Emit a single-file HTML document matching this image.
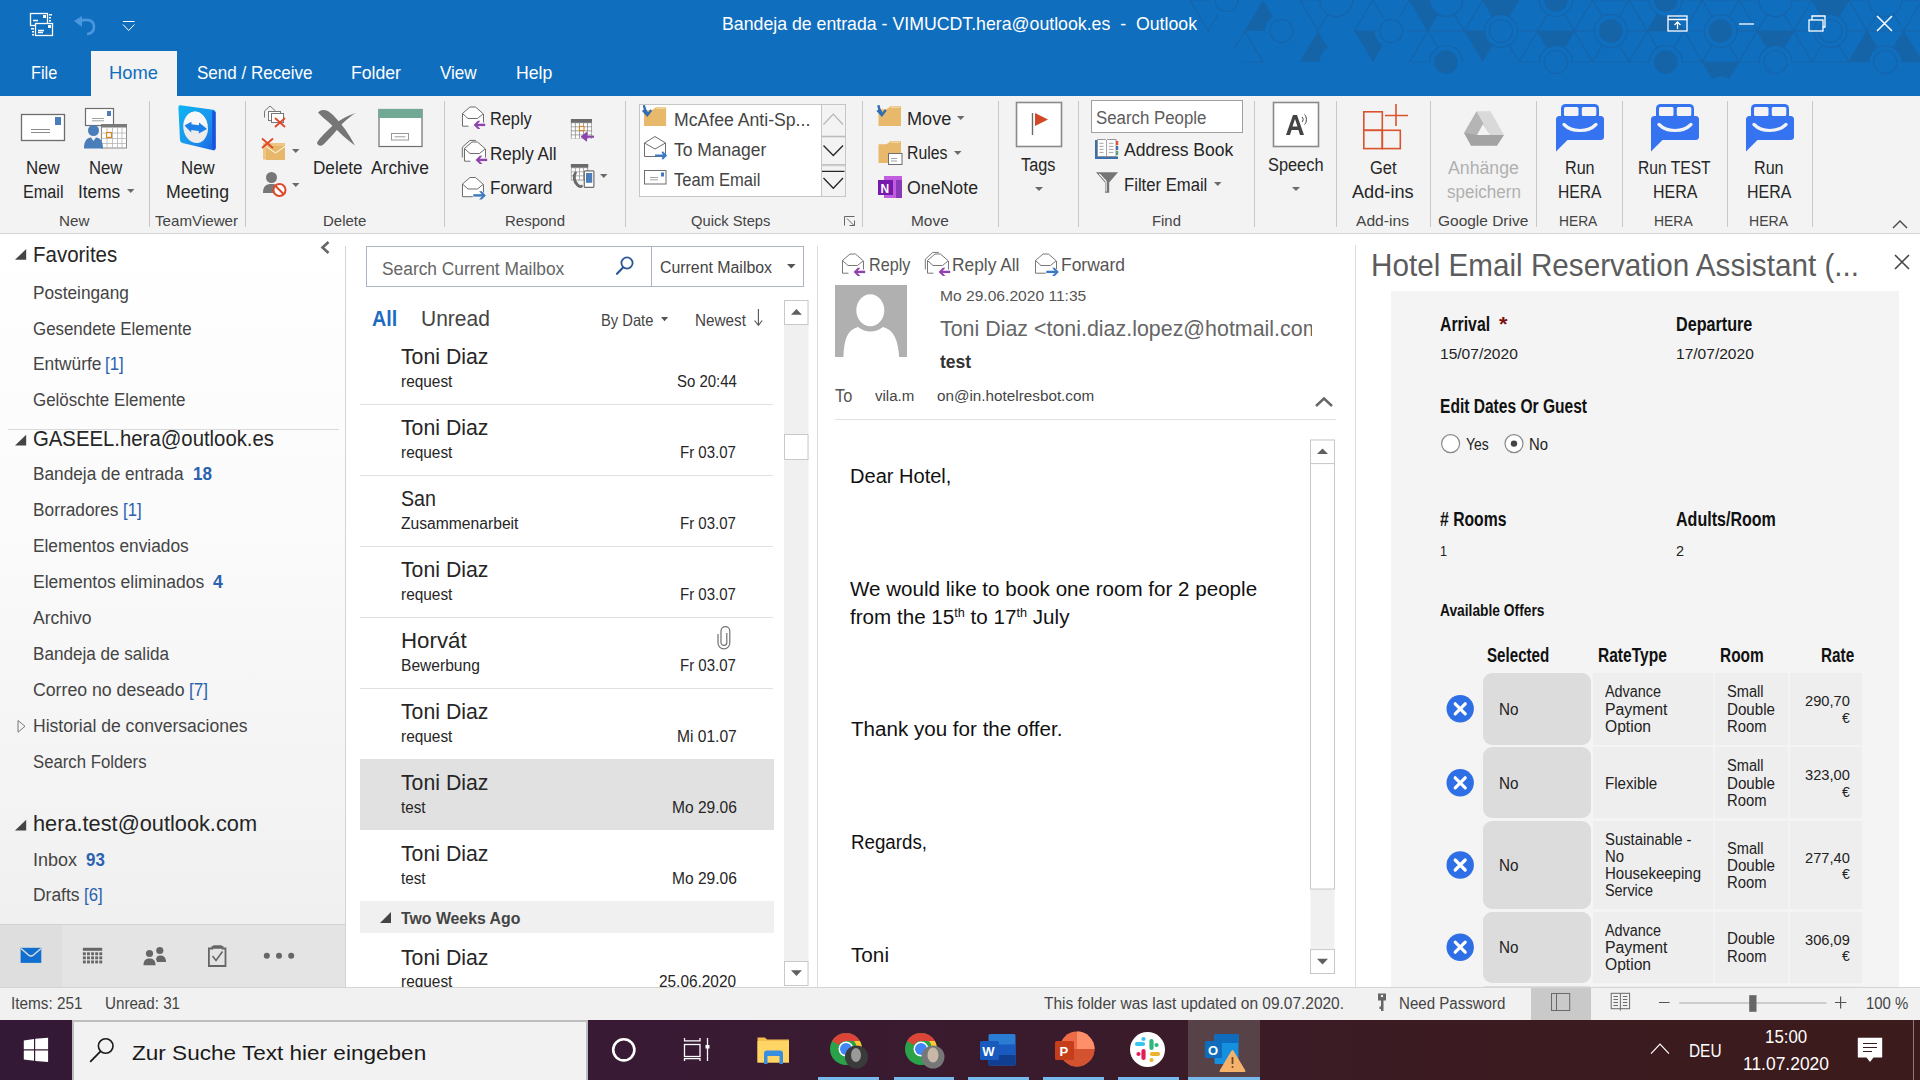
<!DOCTYPE html>
<html><head><meta charset="utf-8"><style>*{margin:0;padding:0;box-sizing:border-box}
html,body{width:1920px;height:1080px;overflow:hidden;background:#fff;font-family:"Liberation Sans",sans-serif;color:#262626}
.a{position:absolute}
.t{position:absolute;white-space:nowrap;line-height:1}
svg{position:absolute;overflow:visible}
</style></head><body>
<div class="a" style="left:0px;top:0px;width:1920px;height:96px;background:#106ebe;"></div>
<svg width="1920" height="96" style="left:0;top:0"><defs><clipPath id="tc"><rect x="1180" y="0" width="740" height="96"></rect></clipPath></defs><g clip-path="url(#tc)"><path d="M1263.1 0.0L1244.8 31.0L1281.4 31.0ZM1318.0 31.0L1299.7 62.0L1336.3 62.0ZM1354.6 31.0L1391.2 31.0L1372.9 62.0ZM1409.5 0.0L1446.1 0.0L1427.8 31.0ZM1482.7 0.0L1519.3 0.0L1501.0 31.0ZM1464.4 31.0L1501.0 31.0L1482.7 62.0ZM1537.6 31.0L1574.2 31.0L1555.9 62.0ZM1665.7 0.0L1647.4 31.0L1684.0 31.0ZM1757.2 31.0L1793.8 31.0L1775.5 62.0ZM1812.1 0.0L1848.7 0.0L1830.4 31.0ZM1867.0 31.0L1848.7 62.0L1885.3 62.0ZM1903.6 31.0L1885.3 62.0L1921.9 62.0ZM1702.3 62.0L1738.9 62.0L1720.6 93.0Z" fill="#1664a8"></path><path d="M1189.9 0.0L1226.5 0.0L1208.2 31.0ZM1244.8 31.0L1226.5 62.0L1263.1 62.0ZM1299.7 0.0L1336.3 0.0L1318.0 31.0ZM1372.9 0.0L1354.6 31.0L1391.2 31.0ZM1409.5 0.0L1391.2 31.0L1427.8 31.0ZM1446.1 0.0L1427.8 31.0L1464.4 31.0ZM1482.7 0.0L1464.4 31.0L1501.0 31.0ZM1427.8 31.0L1409.5 62.0L1446.1 62.0ZM1501.0 31.0L1537.6 31.0L1519.3 62.0ZM1537.6 31.0L1519.3 62.0L1555.9 62.0ZM1555.9 0.0L1537.6 31.0L1574.2 31.0ZM1592.5 0.0L1574.2 31.0L1610.8 31.0ZM1574.2 31.0L1555.9 62.0L1592.5 62.0ZM1574.2 31.0L1610.8 31.0L1592.5 62.0ZM1592.5 0.0L1574.2 31.0L1610.8 31.0ZM1592.5 0.0L1629.1 0.0L1610.8 31.0ZM1610.8 31.0L1592.5 62.0L1629.1 62.0ZM1610.8 31.0L1647.4 31.0L1629.1 62.0ZM1629.1 0.0L1610.8 31.0L1647.4 31.0ZM1629.1 0.0L1665.7 0.0L1647.4 31.0ZM1647.4 31.0L1629.1 62.0L1665.7 62.0ZM1647.4 31.0L1684.0 31.0L1665.7 62.0ZM1665.7 0.0L1647.4 31.0L1684.0 31.0ZM1665.7 0.0L1702.3 0.0L1684.0 31.0ZM1684.0 31.0L1665.7 62.0L1702.3 62.0ZM1684.0 31.0L1720.6 31.0L1702.3 62.0ZM1702.3 0.0L1684.0 31.0L1720.6 31.0ZM1702.3 0.0L1738.9 0.0L1720.6 31.0ZM1720.6 31.0L1702.3 62.0L1738.9 62.0ZM1720.6 31.0L1757.2 31.0L1738.9 62.0ZM1738.9 0.0L1720.6 31.0L1757.2 31.0ZM1738.9 0.0L1775.5 0.0L1757.2 31.0ZM1757.2 31.0L1738.9 62.0L1775.5 62.0ZM1757.2 31.0L1793.8 31.0L1775.5 62.0ZM1775.5 0.0L1757.2 31.0L1793.8 31.0ZM1775.5 0.0L1812.1 0.0L1793.8 31.0ZM1793.8 31.0L1775.5 62.0L1812.1 62.0ZM1793.8 31.0L1830.4 31.0L1812.1 62.0ZM1812.1 0.0L1793.8 31.0L1830.4 31.0ZM1812.1 0.0L1848.7 0.0L1830.4 31.0ZM1830.4 31.0L1812.1 62.0L1848.7 62.0ZM1830.4 31.0L1867.0 31.0L1848.7 62.0ZM1848.7 0.0L1830.4 31.0L1867.0 31.0ZM1848.7 0.0L1885.3 0.0L1867.0 31.0ZM1867.0 31.0L1848.7 62.0L1885.3 62.0ZM1867.0 31.0L1903.6 31.0L1885.3 62.0ZM1885.3 0.0L1867.0 31.0L1903.6 31.0ZM1885.3 0.0L1921.9 0.0L1903.6 31.0ZM1903.6 31.0L1885.3 62.0L1921.9 62.0ZM1903.6 31.0L1940.2 31.0L1921.9 62.0ZM1921.9 0.0L1903.6 31.0L1940.2 31.0ZM1921.9 0.0L1958.5 0.0L1940.2 31.0ZM1940.2 31.0L1921.9 62.0L1958.5 62.0ZM1940.2 31.0L1976.8 31.0L1958.5 62.0Z" fill="none" stroke="#1664a8" stroke-width="1.1"></path><circle cx="1226.5" cy="0.0" r="16.5" fill="#106ebe"></circle><circle cx="1226.5" cy="62.0" r="16.5" fill="#106ebe"></circle><circle cx="1336.3" cy="0.0" r="16.5" fill="#106ebe"></circle><circle cx="1336.3" cy="62.0" r="16.5" fill="#106ebe"></circle><circle cx="1446.1" cy="0.0" r="16.5" fill="#106ebe" stroke="#1664a8" stroke-width="1.1"></circle><circle cx="1446.1" cy="62.0" r="16.5" fill="#106ebe" stroke="#1664a8" stroke-width="1.1"></circle><circle cx="1555.9" cy="0.0" r="16.5" fill="#106ebe" stroke="#1664a8" stroke-width="1.1"></circle><circle cx="1555.9" cy="62.0" r="16.5" fill="#106ebe" stroke="#1664a8" stroke-width="1.1"></circle><circle cx="1665.7" cy="0.0" r="16.5" fill="#106ebe" stroke="#1664a8" stroke-width="1.1"></circle><circle cx="1665.7" cy="62.0" r="16.5" fill="#106ebe" stroke="#1664a8" stroke-width="1.1"></circle><circle cx="1775.5" cy="0.0" r="16.5" fill="#106ebe" stroke="#1664a8" stroke-width="1.1"></circle><circle cx="1775.5" cy="62.0" r="16.5" fill="#106ebe" stroke="#1664a8" stroke-width="1.1"></circle><circle cx="1885.3" cy="0.0" r="16.5" fill="#106ebe" stroke="#1664a8" stroke-width="1.1"></circle><circle cx="1885.3" cy="62.0" r="16.5" fill="#106ebe" stroke="#1664a8" stroke-width="1.1"></circle><circle cx="1281.4" cy="31.0" r="16.5" fill="#106ebe"></circle><circle cx="1391.2" cy="31.0" r="16.5" fill="#106ebe"></circle><circle cx="1501.0" cy="31.0" r="16.5" fill="#106ebe" stroke="#1664a8" stroke-width="1.1"></circle><circle cx="1610.8" cy="31.0" r="16.5" fill="#106ebe" stroke="#1664a8" stroke-width="1.1"></circle><circle cx="1720.6" cy="31.0" r="16.5" fill="#106ebe" stroke="#1664a8" stroke-width="1.1"></circle><circle cx="1830.4" cy="31.0" r="16.5" fill="#106ebe" stroke="#1664a8" stroke-width="1.1"></circle><circle cx="1940.2" cy="31.0" r="16.5" fill="#106ebe" stroke="#1664a8" stroke-width="1.1"></circle><circle cx="1720.6" cy="93.0" r="16.5" fill="#106ebe" stroke="#1664a8" stroke-width="1.1"></circle><rect x="1180" y="62.6" width="740" height="34" fill="#106ebe"></rect><path d="M1702.3 62.6L1738.9 62.6L1720.6 93Z" fill="#1664a8"></path><circle cx="1720.6" cy="93" r="16.5" fill="#106ebe"></circle><circle cx="1555.9" cy="0.0" r="11.8" fill="#1664a8"></circle><circle cx="1665.7" cy="0.0" r="11.8" fill="#1664a8"></circle><circle cx="1610.8" cy="31.0" r="11.8" fill="#1664a8"></circle><circle cx="1720.6" cy="31.0" r="11.8" fill="#1664a8"></circle><circle cx="1446.1" cy="62.0" r="11.8" fill="#1664a8"></circle><circle cx="1665.7" cy="62.0" r="11.8" fill="#1664a8"></circle><circle cx="1226.5" cy="0.0" r="11.5" fill="none" stroke="#1664a8" stroke-width="1.1"></circle><circle cx="1281.4" cy="31.0" r="11.5" fill="none" stroke="#1664a8" stroke-width="1.1"></circle><circle cx="1391.2" cy="31.0" r="11.5" fill="none" stroke="#1664a8" stroke-width="1.1"></circle><circle cx="1501.0" cy="31.0" r="11.5" fill="none" stroke="#1664a8" stroke-width="1.1"></circle><circle cx="1555.9" cy="62.0" r="11.5" fill="none" stroke="#1664a8" stroke-width="1.1"></circle><circle cx="1775.5" cy="62.0" r="11.5" fill="none" stroke="#1664a8" stroke-width="1.1"></circle><circle cx="1830.4" cy="31.0" r="11.5" fill="none" stroke="#1664a8" stroke-width="1.1"></circle><circle cx="1885.3" cy="62.0" r="11.5" fill="none" stroke="#1664a8" stroke-width="1.1"></circle><circle cx="1336.3" cy="0.0" r="16.5" fill="none" stroke="#1664a8" stroke-width="1.1"></circle><circle cx="1446.1" cy="0.0" r="16.5" fill="none" stroke="#1664a8" stroke-width="1.1"></circle></g></svg>
<svg width="1920" height="96" style="left:0;top:0" viewBox="0 0 1920 96">
<!-- QAT -->
<g fill="none" stroke="#fff" stroke-width="1.3">
<rect x="30.5" y="13.5" width="17" height="12"></rect>
<rect x="35.5" y="23.5" width="17" height="12" fill="#106ebe"></rect>
<path d="M33 20.5h5M38 30.5h6M38 32.5h5"></path>
</g>
<g fill="#fff"><rect x="43" y="15" width="3" height="3"></rect><rect x="48" y="25" width="3" height="3"></rect><rect x="49" y="14" width="3" height="1.5"></rect><rect x="49" y="17" width="2" height="1.5"></rect><rect x="49" y="20" width="2" height="1.5"></rect><rect x="31" y="28" width="3" height="1.5"></rect><rect x="32" y="31" width="2" height="1.5"></rect><rect x="32" y="34" width="2" height="1.5"></rect></g>
<path d="M80 21 C86 19 94 19 94 27 C94 32 90 34 87 34" fill="none" stroke="#4a97dd" stroke-width="2.6"></path>
<path d="M74 21L82 16L82 27Z" fill="#4a97dd"></path>
<path d="M123 21.5h11.5M123 24.5L128.7 30.5L134.4 24.5" fill="none" stroke="#fff" stroke-width="1"></path>
<!-- window buttons -->
<g fill="none" stroke="#fff" stroke-width="1.3">
<rect x="1668" y="16" width="19" height="15"></rect><path d="M1668 19.5h19M1677.5 29V22M1674.5 25L1677.5 22L1680.5 25"></path>
<path d="M1739 24h15"></path>
<rect x="1809" y="20" width="14" height="11"></rect><path d="M1812 20V16H1825V27H1823"></path>
<path d="M1877 16L1892 31M1892 16L1877 31" stroke-width="1.5"></path>
</g>
</svg>
<div class="t" style="left: 722px; top: 14px; font-size: 19px; color: rgb(255, 255, 255); --w: 475; transform-origin: 0px 50%; transform: scaleX(0.9326);">Bandeja de entrada - VIMUCDT.hera@outlook.es&nbsp; - &nbsp;Outlook</div>
<div class="a" style="left:91px;top:51px;width:86px;height:46px;background:#f3f3f3;"></div>
<div class="t" style="left: 31px; top: 63px; font-size: 19px; color: rgb(255, 255, 255); --w: 26.3; transform-origin: 0px 50%; transform: scaleX(0.8588);">File</div>
<div class="t" style="left: 109.3px; top: 63px; font-size: 19px; color: rgb(16, 110, 190); --w: 49; transform-origin: 0px 50%; transform: scaleX(0.9667);">Home</div>
<div class="t" style="left: 196.7px; top: 63px; font-size: 19px; color: rgb(255, 255, 255); --w: 115.6; transform-origin: 0px 50%; transform: scaleX(0.8971);">Send / Receive</div>
<div class="t" style="left: 351px; top: 63px; font-size: 19px; color: rgb(255, 255, 255); --w: 50; transform-origin: 0px 50%; transform: scaleX(0.9283);">Folder</div>
<div class="t" style="left: 440px; top: 63px; font-size: 19px; color: rgb(255, 255, 255); --w: 36.7; transform-origin: 0px 50%; transform: scaleX(0.8985);">View</div>
<div class="t" style="left: 516px; top: 63px; font-size: 19px; color: rgb(255, 255, 255); --w: 36.3; transform-origin: 0px 50%; transform: scaleX(0.9289);">Help</div>
<div class="a" style="left:0px;top:96px;width:1920px;height:138px;background:#f3f3f3;border-bottom:1px solid #d5d5d5"></div>
<div class="a" style="left:149px;top:101px;width:1px;height:126px;background:#c8c8c8;"></div>
<div class="a" style="left:245px;top:101px;width:1px;height:126px;background:#c8c8c8;"></div>
<div class="a" style="left:444px;top:101px;width:1px;height:126px;background:#c8c8c8;"></div>
<div class="a" style="left:625px;top:101px;width:1px;height:126px;background:#c8c8c8;"></div>
<div class="a" style="left:862px;top:101px;width:1px;height:126px;background:#c8c8c8;"></div>
<div class="a" style="left:998px;top:101px;width:1px;height:126px;background:#c8c8c8;"></div>
<div class="a" style="left:1078px;top:101px;width:1px;height:126px;background:#c8c8c8;"></div>
<div class="a" style="left:1254px;top:101px;width:1px;height:126px;background:#c8c8c8;"></div>
<div class="a" style="left:1336px;top:101px;width:1px;height:126px;background:#c8c8c8;"></div>
<div class="a" style="left:1430px;top:101px;width:1px;height:126px;background:#c8c8c8;"></div>
<div class="a" style="left:1536px;top:101px;width:1px;height:126px;background:#c8c8c8;"></div>
<div class="a" style="left:1622px;top:101px;width:1px;height:126px;background:#c8c8c8;"></div>
<div class="a" style="left:1727px;top:101px;width:1px;height:126px;background:#c8c8c8;"></div>
<div class="a" style="left:1812px;top:101px;width:1px;height:126px;background:#c8c8c8;"></div>
<svg width="1920" height="240" style="left:0;top:0">
<!-- New Email -->
<rect x="21.5" y="114.5" width="43" height="26" fill="#fff" stroke="#6d6d6d" stroke-width="1.3"></rect>
<rect x="55" y="117" width="6" height="8" fill="#4a7ebb"></rect>
<path d="M31 129.5H50M31 132.5H50" stroke="#8a8a8a" stroke-width="1"></path>
<!-- New Items -->
<rect x="85.5" y="108.5" width="28" height="17" fill="#fff" stroke="#6d6d6d" stroke-width="1.2"></rect>
<rect x="107" y="111" width="4" height="5" fill="#4a7ebb"></rect>
<path d="M92 118.5H104M92 120.8H104" stroke="#8a8a8a" stroke-width="0.8"></path>
<rect x="101.5" y="124.5" width="25" height="23.5" fill="#fff" stroke="#8a8a8a" stroke-width="1"></rect>
<rect x="101" y="124" width="26" height="3.5" fill="#7a7a7a"></rect>
<path d="M101.5 133H126.5M101.5 138.5H126.5M101.5 143.5H126.5M107 127.5V148M112.5 127.5V148M117.5 127.5V148M122 127.5V148" stroke="#b5b5b5" stroke-width="0.8"></path>
<rect x="106.5" y="132.5" width="5" height="5" fill="#fff" stroke="#e0821e" stroke-width="1.2"></rect>
<circle cx="93.5" cy="130.5" r="5.5" fill="#4a7ebb"></circle>
<path d="M84 148.5C84 141 87 137.5 91 137.5L93.5 141L96 137.5C100 137.5 103 141 103 148.5Z" fill="#4a7ebb"></path>
<!-- TeamViewer -->
<defs><linearGradient id="tvg" x1="0" y1="0" x2="1" y2="1"><stop offset="0" stop-color="#0cb4f2"></stop><stop offset="0.55" stop-color="#1a96ee"></stop><stop offset="1" stop-color="#1c62e2"></stop></linearGradient></defs>
<path d="M180.5 105.3Q178.3 105 178.4 107.5L180 140Q180.2 142.5 182.5 143L213 150.3Q215.8 150.8 215.7 148L215.6 113Q215.6 110.2 213 109.8Z" fill="url(#tvg)"></path>
<path d="M212.3 110.5L215.6 112V148.5L212.3 149.2Z" fill="#1a50dc"></path>
<ellipse cx="195.6" cy="127.3" rx="12.3" ry="15.8" transform="rotate(-8 195.6 127.3)" fill="#ececec"></ellipse>
<path d="M195.6 111.5A12.3 15.8 -8 0 1 207.5 125L184 127A12.3 15.8 -8 0 1 195.6 111.5Z" fill="#f7f7f7"></path>
<path d="M184.5 125.5L191.5 121.8V124.3L199 125.2V122.6L207 129L198.8 133.6V131L191.2 130V132.4Z" fill="#1a7fe6"></path>
<!-- ignore -->
<path d="M264.5 117.5V111L270 106L275.5 111" fill="none" stroke="#777" stroke-width="1"></path>
<rect x="268.5" y="111.5" width="12" height="9" fill="#fff" stroke="#777" stroke-width="1"></rect>
<rect x="271.5" y="113.5" width="12" height="9" fill="#fff" stroke="#777" stroke-width="1"></rect>
<path d="M275 118L285 127M285 118L275 127" stroke="#e0472a" stroke-width="1.8"></path>
<!-- cleanup -->
<rect x="263" y="143" width="22" height="16.5" fill="#eec683"></rect>
<rect x="266" y="146" width="19" height="14" fill="#e8b86a"></rect>
<path d="M266 146.5L275.5 153L285 146.5" fill="none" stroke="#fff" stroke-width="1"></path>
<path d="M262 138.5L273 148M273 138.5L262 148" stroke="#e0472a" stroke-width="1.8"></path>
<!-- junk -->
<circle cx="271.5" cy="177.5" r="5.5" fill="#777"></circle>
<path d="M263 193C263 186 266 184 271.5 184C277 184 280 186 280 193Z" fill="#777"></path>
<circle cx="279.5" cy="190" r="6" fill="#fff" stroke="#e0472a" stroke-width="2"></circle>
<path d="M275.5 186L283.5 194" stroke="#e0472a" stroke-width="2"></path>
<path d="M292 149H299.5L295.75 153Z M292 183H299.5L295.75 187Z" fill="#6a6a6a"></path>
<!-- Delete X -->
<path d="M318 112.5C322 108 328 110 333 115C342 124 349 134 355 145.5C350 142 344 137 337 130C330 123 322 117 318 112.5Z" fill="#767676"></path>
<path d="M356 113C346 116 336 122 329 129C323 135 318 140 317 143C318 146 321 147 324 144C330 138 336 131 342 124C347 119 352 115 356 113Z" fill="#767676"></path>
<!-- Archive -->
<rect x="379" y="109.5" width="43" height="37" fill="#fff" stroke="#6f6f6f" stroke-width="1.2"></rect>
<rect x="378.5" y="109" width="44" height="9" fill="#72a994"></rect>
<rect x="391.5" y="133.5" width="17" height="6.5" fill="none" stroke="#9a9a9a" stroke-width="1"></rect>
<path d="M394.5 136.8H405.5" stroke="#9a9a9a" stroke-width="1"></path>
<!-- Reply / Reply all / Forward -->
<g transform="translate(462.3 106)"><path d="M6.2 20.2H0.2V7.5L7.7 1H13.2L21.2 8V16.5" fill="#fff" stroke="#6d6d6d" stroke-width="1"></path><path d="M0.2 7.5L5.7 12.5H15.2L20.7 8" fill="none" stroke="#6d6d6d" stroke-width="1"></path><path d="M22.9 18.9H13.4" stroke="#8e44ad" stroke-width="2.4"></path><path d="M11.3 18.9L15.5 14.8H18.1L14.3 18.9L18.1 23H15.5Z" fill="#8e44ad"></path></g><g transform="translate(464.3 141)"><path d="M-2 16.5V6.2L5.5 -0.6H11.5" fill="none" stroke="#6d6d6d" stroke-width="1"></path><path d="M6.2 20.2H0.2V7.5L7.7 1H13.2L21.2 8V16.5" fill="#fff" stroke="#6d6d6d" stroke-width="1"></path><path d="M0.2 7.5L5.7 12.5H15.2L20.7 8" fill="none" stroke="#6d6d6d" stroke-width="1"></path><path d="M22.9 18.9H13.4" stroke="#8e44ad" stroke-width="2.4"></path><path d="M11.3 18.9L15.5 14.8H18.1L14.3 18.9L18.1 23H15.5Z" fill="#8e44ad"></path></g><g transform="translate(462.3 176.5)"><path d="M10.5 20.2H0.2V7.5L7.7 1H13.2L21.2 8V16" fill="#fff" stroke="#6d6d6d" stroke-width="1"></path><path d="M0.2 7.5L5.7 12.5H15.2L20.7 8" fill="none" stroke="#6d6d6d" stroke-width="1"></path><path d="M11 18.9H20.5" stroke="#3a78c0" stroke-width="2.4"></path><path d="M23.6 18.9L19.4 14.8H16.8L20.6 18.9L16.8 23H19.4Z" fill="#3a78c0"></path></g>
<!-- cal reply -->
<rect x="570.9" y="119" width="21.1" height="19.7" fill="#8c8c8c"></rect>
<rect x="571.6" y="123.2" width="3.3" height="3.25" fill="#fff"></rect><rect x="575.7" y="123.2" width="3.3" height="3.25" fill="#fff"></rect><rect x="579.8" y="123.2" width="3.3" height="3.25" fill="#fff"></rect><rect x="583.9" y="123.2" width="3.3" height="3.25" fill="#fff"></rect><rect x="588.0" y="123.2" width="3.3" height="3.25" fill="#fff"></rect><rect x="571.6" y="127.2" width="3.3" height="3.25" fill="#fff"></rect><rect x="575.7" y="127.2" width="3.3" height="3.25" fill="#fff"></rect><rect x="579.8" y="127.2" width="3.3" height="3.25" fill="#fff"></rect><rect x="583.9" y="127.2" width="3.3" height="3.25" fill="#fff"></rect><rect x="588.0" y="127.2" width="3.3" height="3.25" fill="#fff"></rect><rect x="571.6" y="131.3" width="3.3" height="3.25" fill="#fff"></rect><rect x="575.7" y="131.3" width="3.3" height="3.25" fill="#fff"></rect><rect x="579.8" y="131.3" width="3.3" height="3.25" fill="#fff"></rect><rect x="583.9" y="131.3" width="3.3" height="3.25" fill="#fff"></rect><rect x="588.0" y="131.3" width="3.3" height="3.25" fill="#fff"></rect><rect x="571.6" y="135.3" width="3.3" height="3.25" fill="#fff"></rect><rect x="575.7" y="135.3" width="3.3" height="3.25" fill="#fff"></rect><rect x="579.8" y="135.3" width="3.3" height="3.25" fill="#fff"></rect><rect x="583.9" y="135.3" width="3.3" height="3.25" fill="#fff"></rect><rect x="588.0" y="135.3" width="3.3" height="3.25" fill="#fff"></rect>
<rect x="570.9" y="119" width="21.1" height="3.3" fill="#6a6a6a"></rect>
<rect x="579.4" y="126.4" width="4.6" height="4.2" fill="#fff" stroke="#e0821e" stroke-width="1.1"></rect>
<path d="M582.6 136.7L594 136.7" stroke="#8e44ad" stroke-width="2.2"></path>
<path d="M581.5 136.7L586.5 132.6V140.8Z" fill="#8e44ad" stroke="#8e44ad" stroke-width="1.2" stroke-linejoin="round"></path>
<!-- cal phone -->
<rect x="570.9" y="164" width="17.3" height="16.5" fill="#9a9a9a"></rect>
<rect x="571.6" y="168.2" width="3.3" height="3.25" fill="#fff"></rect><rect x="575.7" y="168.2" width="3.3" height="3.25" fill="#fff"></rect><rect x="579.8" y="168.2" width="3.3" height="3.25" fill="#fff"></rect><rect x="583.9" y="168.2" width="3.3" height="3.25" fill="#fff"></rect><rect x="571.6" y="172.2" width="3.3" height="3.25" fill="#fff"></rect><rect x="575.7" y="172.2" width="3.3" height="3.25" fill="#fff"></rect><rect x="579.8" y="172.2" width="3.3" height="3.25" fill="#fff"></rect><rect x="583.9" y="172.2" width="3.3" height="3.25" fill="#fff"></rect><rect x="571.6" y="176.3" width="3.3" height="3.25" fill="#fff"></rect><rect x="575.7" y="176.3" width="3.3" height="3.25" fill="#fff"></rect><rect x="579.8" y="176.3" width="3.3" height="3.25" fill="#fff"></rect><rect x="583.9" y="176.3" width="3.3" height="3.25" fill="#fff"></rect>
<rect x="570.9" y="164" width="17.3" height="3.3" fill="#6a6a6a"></rect>
<path d="M575.5 173C573.5 175 573.5 181 577.5 185C579 186.5 580.5 186.8 581.5 186.3" fill="none" stroke="#6a6a6a" stroke-width="2.8" stroke-linecap="round"></path>
<rect x="584.3" y="170.8" width="9.6" height="16.6" rx="1" fill="#fff" stroke="#6d6d6d" stroke-width="1.2"></rect>
<rect x="586" y="173" width="6.2" height="9.8" fill="#4a7ebb"></rect>
<path d="M600 174H607.5L603.75 178Z" fill="#6a6a6a"></path>
<!-- Quick steps -->
<rect x="639.5" y="104.5" width="206" height="92" fill="#fff" stroke="#c6c6c6" stroke-width="1"></rect>
<rect x="821.5" y="104.5" width="24" height="92" fill="#f3f3f3" stroke="#c6c6c6" stroke-width="1"></rect>
<path d="M821.5 136.3H845.5M821.5 164.8H845.5" stroke="#b5b5b5" stroke-width="1.2" fill="none"></path>
<path d="M821.5 165.8H845.5M821.5 137H845.5" stroke="#c8c8c8" stroke-width="0.8" fill="none"></path>
<path d="M823.5 124.5L833.3 114.2L843 124.5" fill="none" stroke="#b5b5b5" stroke-width="1.2"></path>
<path d="M823.5 145.5L833.3 155.5L843 145.5" fill="none" stroke="#262626" stroke-width="1.3"></path>
<path d="M822 171.3H844.5M823.5 178L833.3 188.3L843 178" fill="none" stroke="#262626" stroke-width="1.3"></path>
<path d="M644 110.2H652L655.9 107.2H666.1V126H644Z" fill="#e8b96a"></path>
<path d="M656.5 108.3H665" stroke="#f6dcae" stroke-width="1"></path>
<path d="M643.8 105.3C644.5 109 645.5 111.5 647.3 113.5" fill="none" stroke="#2f6db5" stroke-width="2.4"></path>
<path d="M642.8 110.3L647.3 115.2L651.3 110" fill="none" stroke="#2f6db5" stroke-width="2.2"></path>
<g fill="#fff" stroke="#6d6d6d" stroke-width="1">
<path d="M644.5 156.5V143L655 136.5L665.5 143V156.5Z"></path><path d="M644.5 143L655 149L665.5 143" fill="none"></path>
<rect x="644.5" y="170.5" width="21.5" height="13.5"></rect>
</g>
<path d="M655 155.5H665.5M662.2 152L665.7 155.5L662.2 159" fill="none" stroke="#3a7bc8" stroke-width="2"></path>
<rect x="661" y="172.5" width="3" height="4" fill="#3a7bc8"></rect>
<path d="M650 177.5H658M650 179.8H658" stroke="#8a8a8a" stroke-width="0.8"></path>
<path d="M844.5 225.5V216.5H854.5M847 218.5L854 225.5M849.5 225.5H854.5V220.5" fill="none" stroke="#555" stroke-width="0.9"></path>
<!-- Move -->
<path d="M878.5 109.2H886.5L890.5 106.2H901V126H878.5Z" fill="#e8b96a"></path>
<path d="M891 107.3H900" stroke="#f6dcae" stroke-width="1"></path>
<path d="M878.3 105.3C879 109 880 111.5 881.8 113.5" fill="none" stroke="#2f6db5" stroke-width="2.4"></path>
<path d="M877.3 110.3L881.8 115.2L885.8 110" fill="none" stroke="#2f6db5" stroke-width="2.2"></path>
<path d="M878.5 144.2H886.5L890.5 141.2H901V163H878.5Z" fill="#e8b96a"></path>
<path d="M891 142.3H900" stroke="#f6dcae" stroke-width="1"></path>
<rect x="888.5" y="153.5" width="13.5" height="11" fill="#fff" stroke="#6d6d6d" stroke-width="1"></rect>
<path d="M891 158.5H897M891 161H897" stroke="#8a8a8a" stroke-width="0.8"></path>
<path d="M957 116H964.5L960.75 120Z M954 151H961.5L957.75 155Z" fill="#6a6a6a"></path>
<rect x="884" y="176" width="18" height="22" fill="#c05edf"></rect>
<rect x="896" y="180" width="6" height="18" fill="#8a3ab9"></rect>
<rect x="878" y="180" width="15" height="15" fill="#7719aa"></rect>
<text x="880.5" y="192.5" font-family="Liberation Sans" font-weight="bold" font-size="12" fill="#fff">N</text>
<!-- Tags -->
<rect x="1016.5" y="102.5" width="45" height="44" fill="#fff" stroke="#8a8a8a" stroke-width="1.6"></rect>
<path d="M1032.5 113V135" stroke="#6a6a6a" stroke-width="1.4"></path>
<path d="M1035 113L1048 119.5L1035 126Z" fill="#d24726"></path>
<path d="M1035 187H1043L1039 191Z" fill="#6a6a6a"></path>
<!-- Find -->
<rect x="1091.5" y="100.5" width="151" height="32" fill="#fff" stroke="#a0a0a0" stroke-width="1"></rect>
<path d="M1095 139.9H1097.4V156.5H1118V158.9H1095Z" fill="#3a6fb0"></path>
<path d="M1097.5 139.5H1105.5L1106.5 140.5L1107.5 139.5H1116V156.5H1097.5Z" fill="#fff" stroke="#8a8a8a" stroke-width="0.9"></path>
<path d="M1106.5 140.5V156.5" stroke="#9a9a9a" stroke-width="0.9"></path>
<path d="M1099.5 143.3H1103.5M1099.5 146.4H1103.5M1099.5 149.4H1103.5M1099.5 152.4H1103.5M1108.8 143.3H1113.5M1108.8 146.4H1113.5M1108.8 149.4H1113.5M1108.8 152.4H1113.5" stroke="#9a9a9a" stroke-width="0.9"></path>
<rect x="1116" y="141" width="2.2" height="4" fill="#e0532f"></rect><rect x="1116" y="146" width="2.2" height="4" fill="#3a6fb0"></rect><rect x="1116" y="151" width="2.2" height="4" fill="#5aa07a"></rect>
<path d="M1096 172.2H1118L1109.2 182.5V192.8H1105V182.5Z" fill="#767676"></path>
<path d="M1099.3 173.8L1106.1 181.3V191.6" fill="none" stroke="#fff" stroke-width="1.1"></path>
<path d="M1214 182H1221.5L1217.75 186Z" fill="#6a6a6a"></path>
<!-- Speech -->
<rect x="1273.5" y="102.5" width="45" height="44" fill="#fff" stroke="#8a8a8a" stroke-width="1.6"></rect>
<path d="M1286 135L1293 115H1297L1304 135H1300L1298.5 130H1291.5L1290 135ZM1292.5 126.5H1297.5L1295 119Z" fill="#444"></path>
<path d="M1302 117C1303.5 118 1303.5 121 1302 122M1304.5 114.5C1307 116.5 1307 122.5 1304.5 124.5" fill="none" stroke="#444" stroke-width="1"></path>
<path d="M1292 187H1300L1296 191Z" fill="#6a6a6a"></path>
<!-- Add-ins -->
<g fill="none" stroke="#d9532c" stroke-width="1.6">
<rect x="1363.8" y="111.8" width="18.5" height="18.5"></rect><rect x="1363.8" y="130.3" width="18.5" height="18.3"></rect><rect x="1382.3" y="130.3" width="18" height="18.3"></rect>
<path d="M1396 104V126M1385 115.5H1408"></path>
</g>
<!-- Google drive -->
<path d="M1476.5 111.3H1490.5L1504 135H1490Z" fill="#d9d9d9"></path>
<path d="M1476.5 111.3L1490 135L1483 145.7L1464 133Z" fill="#b5b5b5"></path>
<path d="M1464 133L1471 145.7H1497L1504 135H1477Z" fill="#a3a3a3"></path>
<path d="M1483 124L1490 135H1477Z" fill="#f3f3f3"></path>
</svg>
<svg width="48" height="48" style="left:1556px;top:104px" viewBox="0 0 48 48">
<rect x="5" y="0" width="38" height="16" rx="4.5" fill="#3573f0"></rect>
<rect x="0" y="12" width="48" height="24" rx="3.5" fill="#3573f0"></rect>
<path d="M0 30V47.5L12 35.5Z" fill="#3573f0"></path>
<rect x="8" y="3" width="14.5" height="9" rx="1.5" fill="#f3f3f3"></rect><rect x="25.8" y="3" width="14.5" height="9" rx="1.5" fill="#f3f3f3"></rect>
<path d="M8 20.5C16 28.5 32 28.5 40 20.5" fill="none" stroke="#f3f3f3" stroke-width="3.2" stroke-linecap="round"></path>
</svg>
<svg width="48" height="48" style="left:1651px;top:104px" viewBox="0 0 48 48">
<rect x="5" y="0" width="38" height="16" rx="4.5" fill="#3573f0"></rect>
<rect x="0" y="12" width="48" height="24" rx="3.5" fill="#3573f0"></rect>
<path d="M0 30V47.5L12 35.5Z" fill="#3573f0"></path>
<rect x="8" y="3" width="14.5" height="9" rx="1.5" fill="#f3f3f3"></rect><rect x="25.8" y="3" width="14.5" height="9" rx="1.5" fill="#f3f3f3"></rect>
<path d="M8 20.5C16 28.5 32 28.5 40 20.5" fill="none" stroke="#f3f3f3" stroke-width="3.2" stroke-linecap="round"></path>
</svg>
<svg width="48" height="48" style="left:1746px;top:104px" viewBox="0 0 48 48">
<rect x="5" y="0" width="38" height="16" rx="4.5" fill="#3573f0"></rect>
<rect x="0" y="12" width="48" height="24" rx="3.5" fill="#3573f0"></rect>
<path d="M0 30V47.5L12 35.5Z" fill="#3573f0"></path>
<rect x="8" y="3" width="14.5" height="9" rx="1.5" fill="#f3f3f3"></rect><rect x="25.8" y="3" width="14.5" height="9" rx="1.5" fill="#f3f3f3"></rect>
<path d="M8 20.5C16 28.5 32 28.5 40 20.5" fill="none" stroke="#f3f3f3" stroke-width="3.2" stroke-linecap="round"></path>
</svg>
<svg width="20" height="12" style="left:1892px;top:218px"><path d="M1 10L8 3L15 10" fill="none" stroke="#444" stroke-width="1.4"></path></svg>
<div class="t" style="left: 25.9px; top: 159px; font-size: 18px; color: rgb(38, 38, 38); --w: 33.8; transform-origin: 0px 50%; transform: scaleX(0.9385);">New</div>
<div class="t" style="left: 23px; top: 183px; font-size: 18px; color: rgb(38, 38, 38); --w: 40.5; transform-origin: 0px 50%; transform: scaleX(0.8997);">Email</div>
<div class="t" style="left: 89.2px; top: 159px; font-size: 18px; color: rgb(38, 38, 38); --w: 33.4; transform-origin: 0px 50%; transform: scaleX(0.9274);">New</div>
<div class="t" style="left: 77.8px; top: 183px; font-size: 18px; color: rgb(38, 38, 38); --w: 42.2; transform-origin: 0px 50%; transform: scaleX(0.9588);">Items</div>
<svg width="10" height="6" style="left:127px;top:189px"><path d="M0 0H7.5L3.75 4Z" fill="#6a6a6a"></path></svg>
<div class="t" style="left: 181px; top: 159px; font-size: 18px; color: rgb(38, 38, 38); --w: 33.7; transform-origin: 0px 50%; transform: scaleX(0.9357);">New</div>
<div class="t" style="left: 166px; top: 183px; font-size: 18px; color: rgb(38, 38, 38); --w: 63; transform-origin: 0px 50%; transform: scaleX(0.9837);">Meeting</div>
<div class="t" style="left: 312.9px; top: 159px; font-size: 18px; color: rgb(38, 38, 38); --w: 49.5; transform-origin: 0px 50%; transform: scaleX(0.9514);">Delete</div>
<div class="t" style="left: 371.3px; top: 159px; font-size: 18px; color: rgb(38, 38, 38); --w: 58; transform-origin: 0px 50%; transform: scaleX(0.9662);">Archive</div>
<div class="t" style="left: 489.8px; top: 110px; font-size: 18px; color: rgb(38, 38, 38); --w: 41.7; transform-origin: 0px 50%; transform: scaleX(0.9059);">Reply</div>
<div class="t" style="left: 489.8px; top: 145px; font-size: 18px; color: rgb(38, 38, 38); --w: 66.5; transform-origin: 0px 50%; transform: scaleX(0.9496);">Reply All</div>
<div class="t" style="left: 490px; top: 179px; font-size: 18px; color: rgb(38, 38, 38); --w: 62.6; transform-origin: 0px 50%; transform: scaleX(0.9483);">Forward</div>
<div class="t" style="left: 673.8px; top: 111px; font-size: 18px; color: rgb(68, 68, 68); --w: 136.3; transform-origin: 0px 50%; transform: scaleX(0.9801);">McAfee Anti-Sp...</div>
<div class="t" style="left: 673.8px; top: 141px; font-size: 18px; color: rgb(68, 68, 68); --w: 92.3; transform-origin: 0px 50%; transform: scaleX(0.9709);">To Manager</div>
<div class="t" style="left: 673.8px; top: 171px; font-size: 18px; color: rgb(68, 68, 68); --w: 86.3; transform-origin: 0px 50%; transform: scaleX(0.9178);">Team Email</div>
<div class="t" style="left: 906.9px; top: 110px; font-size: 18px; color: rgb(38, 38, 38); --w: 44.3; transform-origin: 0px 50%; transform: scaleX(1.0065);">Move</div>
<div class="t" style="left: 907px; top: 144px; font-size: 18px; color: rgb(38, 38, 38); --w: 40.5; transform-origin: 0px 50%; transform: scaleX(0.8798);">Rules</div>
<div class="t" style="left: 907px; top: 179px; font-size: 18px; color: rgb(38, 38, 38); --w: 71; transform-origin: 0px 50%; transform: scaleX(0.9855);">OneNote</div>
<div class="t" style="left: 1021px; top: 156px; font-size: 18px; color: rgb(38, 38, 38); --w: 34.4; transform-origin: 0px 50%; transform: scaleX(0.9045);">Tags</div>
<div class="t" style="left: 1095.5px; top: 109px; font-size: 18px; color: rgb(92, 92, 92); --w: 110.4; transform-origin: 0px 50%; transform: scaleX(0.9349);">Search People</div>
<div class="t" style="left: 1123.9px; top: 141px; font-size: 18px; color: rgb(38, 38, 38); --w: 109.4; transform-origin: 0px 50%; transform: scaleX(0.9762);">Address Book</div>
<div class="t" style="left: 1124px; top: 176px; font-size: 18px; color: rgb(38, 38, 38); --w: 83.3; transform-origin: 0px 50%; transform: scaleX(0.9254);">Filter Email</div>
<div class="t" style="left: 1267.8px; top: 156px; font-size: 18px; color: rgb(38, 38, 38); --w: 55.5; transform-origin: 0px 50%; transform: scaleX(0.9089);">Speech</div>
<div class="t" style="left: 1370.4px; top: 159px; font-size: 18px; color: rgb(38, 38, 38); --w: 26.6; transform-origin: 0px 50%; transform: scaleX(0.9167);">Get</div>
<div class="t" style="left: 1352.4px; top: 183px; font-size: 18px; color: rgb(38, 38, 38); --w: 61.6; transform-origin: 0px 50%; transform: scaleX(1.0093);">Add-ins</div>
<div class="t" style="left: 1448px; top: 159px; font-size: 18px; color: rgb(176, 176, 176); --w: 70.8; transform-origin: 0px 50%; transform: scaleX(0.9823);">Anhänge</div>
<div class="t" style="left: 1446.5px; top: 183px; font-size: 18px; color: rgb(176, 176, 176); --w: 73.9; transform-origin: 0px 50%; transform: scaleX(0.9469);">speichern</div>
<div class="t" style="left: 1565px; top: 159px; font-size: 18px; color: rgb(38, 38, 38); --w: 29.6; transform-origin: 0px 50%; transform: scaleX(0.8961);">Run</div>
<div class="t" style="left: 1557.9px; top: 183px; font-size: 18px; color: rgb(38, 38, 38); --w: 43.4; transform-origin: 0px 50%; transform: scaleX(0.8677);">HERA</div>
<div class="t" style="left: 1638.4px; top: 159px; font-size: 18px; color: rgb(38, 38, 38); --w: 72.6; transform-origin: 0px 50%; transform: scaleX(0.8674);">Run TEST</div>
<div class="t" style="left: 1652.5px; top: 183px; font-size: 18px; color: rgb(38, 38, 38); --w: 44.3; transform-origin: 0px 50%; transform: scaleX(0.8857);">HERA</div>
<div class="t" style="left: 1754px; top: 159px; font-size: 18px; color: rgb(38, 38, 38); --w: 29.6; transform-origin: 0px 50%; transform: scaleX(0.8961);">Run</div>
<div class="t" style="left: 1747px; top: 183px; font-size: 18px; color: rgb(38, 38, 38); --w: 44.3; transform-origin: 0px 50%; transform: scaleX(0.8857);">HERA</div>
<div class="t" style="left: 58.8px; top: 214px; font-size: 14.5px; color: rgb(68, 68, 68); --w: 30.4; transform-origin: 0px 50%; transform: scaleX(1.0477);">New</div>
<div class="t" style="left: 155.2px; top: 214px; font-size: 14.5px; color: rgb(68, 68, 68); --w: 83.1; transform-origin: 0px 50%; transform: scaleX(1.0449);">TeamViewer</div>
<div class="t" style="left: 322.7px; top: 214px; font-size: 14.5px; color: rgb(68, 68, 68); --w: 43.3; transform-origin: 0px 50%; transform: scaleX(1.0329);">Delete</div>
<div class="t" style="left: 504.6px; top: 214px; font-size: 14.5px; color: rgb(68, 68, 68); --w: 60; transform-origin: 0px 50%; transform: scaleX(1.0336);">Respond</div>
<div class="t" style="left: 690.6px; top: 214px; font-size: 14.5px; color: rgb(68, 68, 68); --w: 79.4; transform-origin: 0px 50%; transform: scaleX(1.0157);">Quick Steps</div>
<div class="t" style="left: 910.9px; top: 214px; font-size: 14.5px; color: rgb(68, 68, 68); --w: 37.8; transform-origin: 0px 50%; transform: scaleX(1.0657);">Move</div>
<div class="t" style="left: 1151.7px; top: 214px; font-size: 14.5px; color: rgb(68, 68, 68); --w: 28.9; transform-origin: 0px 50%; transform: scaleX(1.0241);">Find</div>
<div class="t" style="left: 1356px; top: 214px; font-size: 14.5px; color: rgb(68, 68, 68); --w: 53; transform-origin: 0px 50%; transform: scaleX(1.0779);">Add-ins</div>
<div class="t" style="left: 1437.6px; top: 214px; font-size: 14.5px; color: rgb(68, 68, 68); --w: 90.3; transform-origin: 0px 50%; transform: scaleX(1.0671);">Google Drive</div>
<div class="t" style="left: 1559.4px; top: 214px; font-size: 14.5px; color: rgb(68, 68, 68); --w: 38.3; transform-origin: 0px 50%; transform: scaleX(0.9504);">HERA</div>
<div class="t" style="left: 1654.3px; top: 214px; font-size: 14.5px; color: rgb(68, 68, 68); --w: 38.7; transform-origin: 0px 50%; transform: scaleX(0.9604);">HERA</div>
<div class="t" style="left: 1749px; top: 214px; font-size: 14.5px; color: rgb(68, 68, 68); --w: 39; transform-origin: 0px 50%; transform: scaleX(0.9678);">HERA</div>
<div class="a" style="left:0px;top:234px;width:345px;height:690px;background:linear-gradient(#ffffff 0%,#fbfbfb 40%,#f0f0f0 100%);"></div>
<div class="a" style="left:0px;top:924px;width:346px;height:64px;background:#e4e4e4;border-top:1px solid #d2d2d2"></div>
<div class="a" style="left:0px;top:925px;width:62px;height:63px;background:#dedede;"></div>
<div class="a" style="left:345px;top:246px;width:1px;height:741px;background:#d4d4d4;"></div>
<div class="a" style="left:8px;top:429px;width:331px;height:1px;background:#dadada;"></div>
<svg width="360" height="1000" style="left:0;top:0">
<path d="M15 259.8L26.2 249V259.8Z" fill="#444"></path>
<path d="M15 445.5L26.2 434.7V445.5Z" fill="#444"></path>
<path d="M15 830.5L26.2 819.7V830.5Z" fill="#444"></path>
<path d="M18 720.5L25 726.3L18 732.2Z" fill="none" stroke="#777" stroke-width="1"></path>
<path d="M328.5 242L322.5 247.5L328.5 253" fill="none" stroke="#666" stroke-width="2.6"></path>
<!-- bottom icons -->
<rect x="20.6" y="947.8" width="20.7" height="15.1" fill="#1170cf"></rect>
<path d="M21 948.5L28.5 955Q31 957 33.5 955L41 948.5" fill="none" stroke="#dedede" stroke-width="1.4"></path>
<rect x="82.9" y="947.8" width="19.3" height="3" fill="#666"></rect>
<g fill="#666">
<rect x="82.9" y="952.3" width="2.9" height="2.9"></rect><rect x="87.0" y="952.3" width="2.9" height="2.9"></rect><rect x="91.1" y="952.3" width="2.9" height="2.9"></rect><rect x="95.2" y="952.3" width="2.9" height="2.9"></rect><rect x="99.3" y="952.3" width="2.9" height="2.9"></rect><rect x="82.9" y="956.4" width="2.9" height="2.9"></rect><rect x="87.0" y="956.4" width="2.9" height="2.9"></rect><rect x="91.1" y="956.4" width="2.9" height="2.9"></rect><rect x="95.2" y="956.4" width="2.9" height="2.9"></rect><rect x="99.3" y="956.4" width="2.9" height="2.9"></rect><rect x="82.9" y="960.5" width="2.9" height="2.9"></rect><rect x="87.0" y="960.5" width="2.9" height="2.9"></rect><rect x="91.1" y="960.5" width="2.9" height="2.9"></rect><rect x="95.2" y="960.5" width="2.9" height="2.9"></rect><rect x="99.3" y="960.5" width="2.9" height="2.9"></rect>
<circle cx="149.5" cy="953.5" r="3.6"></circle><path d="M143.5 965.3C143.5 960 146 958.5 149.5 958.5C153 958.5 155.5 960 155.5 965.3Z"></path>
<circle cx="159.8" cy="950.5" r="3.6"></circle><path d="M156 959C156.5 956.5 158 955.5 160 955.5C163.5 955.5 166 957 166 962H157Z"></path>
<circle cx="266.8" cy="955.7" r="3"></circle><circle cx="279" cy="955.7" r="3"></circle><circle cx="291.2" cy="955.7" r="3"></circle>
</g>
<path d="M208.9 948.5H212.5V947H222.5V948.5H225.5V966H208.9Z" fill="none" stroke="#666" stroke-width="1.8"></path>
<rect x="213" y="945.2" width="9" height="3.5" fill="#666" rx="1"></rect>
<path d="M212.5 956L216 960.5L222.5 951.5" fill="none" stroke="#666" stroke-width="1.6"></path>
</svg>
<div class="t" style="left: 33.3px; top: 245px; font-size: 21.5px; color: rgb(38, 38, 38); --w: 84.2; transform-origin: 0px 50%; transform: scaleX(0.9523);">Favorites</div>
<div class="t" style="left: 33.3px; top: 284px; font-size: 18px; color: rgb(68, 68, 68); --w: 95.9; transform-origin: 0px 50%; transform: scaleX(0.9581);">Posteingang</div>
<div class="t" style="left: 33.3px; top: 320px; font-size: 18px; color: rgb(68, 68, 68); --w: 158.7; transform-origin: 0px 50%; transform: scaleX(0.9384);">Gesendete Elemente</div>
<div class="t" style="left: 33.3px; top: 391px; font-size: 18px; color: rgb(68, 68, 68); --w: 152.5; transform-origin: 0px 50%; transform: scaleX(0.9408);">Gelöschte Elemente</div>
<div class="t" style="left: 33.3px; top: 355px; font-size: 18px; color: rgb(68, 68, 68); --w: 68.5; transform-origin: 0px 50%; transform: scaleX(0.9642);">Entwürfe</div>
<div class="t" style="left: 104.7px; top: 355px; font-size: 18px; color: rgb(42, 98, 176); --w: 18.6; transform-origin: 0px 50%; transform: scaleX(0.9293);">[1]</div>
<div class="t" style="left: 32.7px; top: 429px; font-size: 21.5px; color: rgb(38, 38, 38); --w: 241; transform-origin: 0px 50%; transform: scaleX(0.9455);">GASEEL.hera@outlook.es</div>
<div class="t" style="left: 33px; top: 465px; font-size: 18px; color: rgb(68, 68, 68); --w: 150.5; transform-origin: 0px 50%; transform: scaleX(0.9577);">Bandeja de entrada</div>
<div class="t" style="left: 193px; top: 465px; font-size: 18px; color: rgb(42, 98, 176); font-weight: bold; --w: 19; transform-origin: 0px 50%; transform: scaleX(0.9485);">18</div>
<div class="t" style="left: 33px; top: 501px; font-size: 18px; color: rgb(68, 68, 68); --w: 85.5; transform-origin: 0px 50%; transform: scaleX(0.9602);">Borradores</div>
<div class="t" style="left: 122.5px; top: 501px; font-size: 18px; color: rgb(42, 98, 176); --w: 18.6; transform-origin: 0px 50%; transform: scaleX(0.9293);">[1]</div>
<div class="t" style="left: 33px; top: 537px; font-size: 18px; color: rgb(68, 68, 68); --w: 155.7; transform-origin: 0px 50%; transform: scaleX(0.9605);">Elementos enviados</div>
<div class="t" style="left: 33px; top: 573px; font-size: 18px; color: rgb(68, 68, 68); --w: 171.3; transform-origin: 0px 50%; transform: scaleX(0.9728);">Elementos eliminados</div>
<div class="t" style="left: 213px; top: 573px; font-size: 18px; color: rgb(42, 98, 176); font-weight: bold; --w: 9.8; transform-origin: 0px 50%; transform: scaleX(0.9785);">4</div>
<div class="t" style="left: 33px; top: 609px; font-size: 18px; color: rgb(68, 68, 68); --w: 58.5; transform-origin: 0px 50%; transform: scaleX(0.9745);">Archivo</div>
<div class="t" style="left: 33px; top: 645px; font-size: 18px; color: rgb(68, 68, 68); --w: 136; transform-origin: 0px 50%; transform: scaleX(0.9502);">Bandeja de salida</div>
<div class="t" style="left: 33px; top: 681px; font-size: 18px; color: rgb(68, 68, 68); --w: 151.5; transform-origin: 0px 50%; transform: scaleX(0.9831);">Correo no deseado</div>
<div class="t" style="left: 188.6px; top: 681px; font-size: 18px; color: rgb(42, 98, 176); --w: 19.1; transform-origin: 0px 50%; transform: scaleX(0.9543);">[7]</div>
<div class="t" style="left: 33px; top: 717px; font-size: 18px; color: rgb(68, 68, 68); --w: 214.5; transform-origin: 0px 50%; transform: scaleX(0.9745);">Historial de conversaciones</div>
<div class="t" style="left: 33px; top: 753px; font-size: 18px; color: rgb(68, 68, 68); --w: 113.5; transform-origin: 0px 50%; transform: scaleX(0.9299);">Search Folders</div>
<div class="t" style="left: 32.7px; top: 814px; font-size: 21.5px; color: rgb(38, 38, 38); --w: 224; transform-origin: 0px 50%; transform: scaleX(1.0117);">hera.test@outlook.com</div>
<div class="t" style="left: 33px; top: 851px; font-size: 18px; color: rgb(68, 68, 68); --w: 44; transform-origin: 0px 50%; transform: scaleX(0.9989);">Inbox</div>
<div class="t" style="left: 85.5px; top: 851px; font-size: 18px; color: rgb(42, 98, 176); font-weight: bold; --w: 18.8; transform-origin: 0px 50%; transform: scaleX(0.9385);">93</div>
<div class="t" style="left: 33px; top: 886px; font-size: 18px; color: rgb(68, 68, 68); --w: 46.5; transform-origin: 0px 50%; transform: scaleX(0.9684);">Drafts</div>
<div class="t" style="left: 84px; top: 886px; font-size: 18px; color: rgb(42, 98, 176); --w: 18.6; transform-origin: 0px 50%; transform: scaleX(0.9293);">[6]</div>
<div class="a" style="left:346px;top:234px;width:472px;height:754px;background:#fff;"></div>
<div class="a" style="left:817px;top:246px;width:1px;height:741px;background:#dcdcdc;"></div>
<div class="a" style="left:366px;top:246px;width:437.5px;height:41px;background:#fff;border:1px solid #abb5c3"></div>
<div class="a" style="left:651px;top:247px;width:1px;height:39px;background:#abb5c3;"></div>
<div class="t" style="left: 382.2px; top: 260px; font-size: 18px; color: rgb(102, 102, 102); --w: 182.3; transform-origin: 0px 50%; transform: scaleX(0.9641);">Search Current Mailbox</div>
<div class="t" style="left: 660px; top: 260px; font-size: 16px; color: rgb(68, 68, 68); --w: 112; transform-origin: 0px 50%; transform: scaleX(0.9917);">Current Mailbox</div>
<svg width="900" height="1000" style="left:0;top:0">
<circle cx="627" cy="263" r="5.6" fill="none" stroke="#2b5797" stroke-width="1.8"></circle>
<path d="M623 267.5L617 273.8" stroke="#2b5797" stroke-width="2.2" stroke-linecap="round"></path>
<path d="M787 264H795.6L791.3 268.5Z M661 317H668.1L664.55 321.25Z" fill="#555"></path>
<path d="M758.4 309V325M754.6 320.5L758.4 325.3L762.2 320.5" fill="none" stroke="#555" stroke-width="1.1"></path>
<!-- scrollbar -->
<rect x="784" y="300" width="24.5" height="686" fill="#f0f0f0"></rect>
<rect x="784.5" y="300.5" width="23.5" height="24" fill="#fff" stroke="#c8c8c8"></rect>
<path d="M791 314.75H801.9L796.45 309Z" fill="#606060"></path>
<rect x="784.5" y="434.5" width="23.5" height="25" fill="#fff" stroke="#c8c8c8"></rect>
<rect x="784.5" y="961.5" width="23.5" height="24" fill="#fff" stroke="#c8c8c8"></rect>
<path d="M791 970.3H801.9L796.45 976Z" fill="#606060"></path>
<!-- paperclip -->
<path d="M726.8 633V642.5A2.9 2.9 0 0 1 721 642.5V631A4.4 4.4 0 0 1 729.8 631V643A5.9 5.9 0 0 1 718 643V634" fill="none" stroke="#707070" stroke-width="1.2"></path>
</svg>
<div class="t" style="left: 371.8px; top: 308px; font-size: 22.5px; color: rgb(26, 107, 196); font-weight: bold; --w: 25.2; transform-origin: 0px 50%; transform: scaleX(0.876);">All</div>
<div class="t" style="left: 421px; top: 308px; font-size: 22.5px; color: rgb(68, 68, 68); --w: 68.8; transform-origin: 0px 50%; transform: scaleX(0.9323);">Unread</div>
<div class="t" style="left: 601px; top: 312px; font-size: 16.5px; color: rgb(68, 68, 68); --w: 52.4; transform-origin: 0px 50%; transform: scaleX(0.8926);">By Date</div>
<div class="t" style="left: 694.9px; top: 312px; font-size: 16.5px; color: rgb(68, 68, 68); --w: 50.9; transform-origin: 0px 50%; transform: scaleX(0.9249);">Newest</div>
<div class="a" style="left:360px;top:404px;width:413px;height:1px;background:#e1e1e1;"></div>
<div class="t" style="left: 400.6px; top: 347px; font-size: 21.5px; color: rgb(38, 38, 38); --w: 87.4; transform-origin: 0px 50%; transform: scaleX(0.9883);">Toni Diaz</div>
<div class="t" style="left: 400.6px; top: 374px; font-size: 16px; color: rgb(38, 38, 38); --w: 51.4; transform-origin: 0px 50%; transform: scaleX(0.963);">request</div>
<div class="t" style="left: 676.5px; top: 374px; font-size: 16px; color: rgb(38, 38, 38); --w: 59.799999999999955; transform-origin: 0px 50%; transform: scaleX(0.9335);">So 20:44</div>
<div class="a" style="left:360px;top:475px;width:413px;height:1px;background:#e1e1e1;"></div>
<div class="t" style="left: 400.6px; top: 418px; font-size: 21.5px; color: rgb(38, 38, 38); --w: 87.4; transform-origin: 0px 50%; transform: scaleX(0.9883);">Toni Diaz</div>
<div class="t" style="left: 400.6px; top: 445px; font-size: 16px; color: rgb(38, 38, 38); --w: 51.4; transform-origin: 0px 50%; transform: scaleX(0.963);">request</div>
<div class="t" style="left: 680.4px; top: 445px; font-size: 16px; color: rgb(38, 38, 38); --w: 55.89999999999998; transform-origin: 0px 50%; transform: scaleX(0.938);">Fr 03.07</div>
<div class="a" style="left:360px;top:546px;width:413px;height:1px;background:#e1e1e1;"></div>
<div class="t" style="left: 400.6px; top: 489px; font-size: 21.5px; color: rgb(38, 38, 38); --w: 35; transform-origin: 0px 50%; transform: scaleX(0.9147);">San</div>
<div class="t" style="left: 400.6px; top: 516px; font-size: 16px; color: rgb(38, 38, 38); --w: 117.4; transform-origin: 0px 50%; transform: scaleX(0.978);">Zusammenarbeit</div>
<div class="t" style="left: 680.4px; top: 516px; font-size: 16px; color: rgb(38, 38, 38); --w: 55.89999999999998; transform-origin: 0px 50%; transform: scaleX(0.938);">Fr 03.07</div>
<div class="a" style="left:360px;top:617px;width:413px;height:1px;background:#e1e1e1;"></div>
<div class="t" style="left: 400.6px; top: 560px; font-size: 21.5px; color: rgb(38, 38, 38); --w: 87.4; transform-origin: 0px 50%; transform: scaleX(0.9883);">Toni Diaz</div>
<div class="t" style="left: 400.6px; top: 587px; font-size: 16px; color: rgb(38, 38, 38); --w: 51.4; transform-origin: 0px 50%; transform: scaleX(0.963);">request</div>
<div class="t" style="left: 680.4px; top: 587px; font-size: 16px; color: rgb(38, 38, 38); --w: 55.89999999999998; transform-origin: 0px 50%; transform: scaleX(0.938);">Fr 03.07</div>
<div class="a" style="left:360px;top:688px;width:413px;height:1px;background:#e1e1e1;"></div>
<div class="t" style="left: 400.6px; top: 631px; font-size: 21.5px; color: rgb(38, 38, 38); --w: 65.6; transform-origin: 0px 50%; transform: scaleX(1.0359);">Horvát</div>
<div class="t" style="left: 400.6px; top: 658px; font-size: 16px; color: rgb(38, 38, 38); --w: 78.8; transform-origin: 0px 50%; transform: scaleX(0.9734);">Bewerbung</div>
<div class="t" style="left: 680.4px; top: 658px; font-size: 16px; color: rgb(38, 38, 38); --w: 55.89999999999998; transform-origin: 0px 50%; transform: scaleX(0.938);">Fr 03.07</div>
<div class="t" style="left: 400.6px; top: 702px; font-size: 21.5px; color: rgb(38, 38, 38); --w: 87.4; transform-origin: 0px 50%; transform: scaleX(0.9883);">Toni Diaz</div>
<div class="t" style="left: 400.6px; top: 729px; font-size: 16px; color: rgb(38, 38, 38); --w: 51.4; transform-origin: 0px 50%; transform: scaleX(0.963);">request</div>
<div class="t" style="left: 676.5px; top: 729px; font-size: 16px; color: rgb(38, 38, 38); --w: 59.799999999999955; transform-origin: 0px 50%; transform: scaleX(0.9743);">Mi 01.07</div>
<div class="a" style="left:360px;top:759px;width:414px;height:71px;background:#e1e1e1;"></div>
<div class="t" style="left: 400.6px; top: 773px; font-size: 21.5px; color: rgb(38, 38, 38); --w: 87.4; transform-origin: 0px 50%; transform: scaleX(0.9883);">Toni Diaz</div>
<div class="t" style="left: 400.6px; top: 800px; font-size: 16px; color: rgb(38, 38, 38); --w: 24.6; transform-origin: 0px 50%; transform: scaleX(0.9536);">test</div>
<div class="t" style="left: 671.5px; top: 800px; font-size: 16px; color: rgb(38, 38, 38); --w: 64.79999999999995; transform-origin: 0px 50%; transform: scaleX(0.9712);">Mo 29.06</div>
<div class="t" style="left: 400.6px; top: 844px; font-size: 21.5px; color: rgb(38, 38, 38); --w: 87.4; transform-origin: 0px 50%; transform: scaleX(0.9883);">Toni Diaz</div>
<div class="t" style="left: 400.6px; top: 871px; font-size: 16px; color: rgb(38, 38, 38); --w: 24.6; transform-origin: 0px 50%; transform: scaleX(0.9536);">test</div>
<div class="t" style="left: 671.5px; top: 871px; font-size: 16px; color: rgb(38, 38, 38); --w: 64.79999999999995; transform-origin: 0px 50%; transform: scaleX(0.9712);">Mo 29.06</div>
<div class="a" style="left:360px;top:688px;width:413px;height:1px;background:#e1e1e1;"></div>
<div class="a" style="left:360px;top:901px;width:414px;height:32px;background:#f0f0f0;"></div>
<svg width="14" height="14" style="left:380px;top:911px"><path d="M0 12L11 1V12Z" fill="#444"></path></svg>
<div class="t" style="left: 401px; top: 911px; font-size: 16px; color: rgb(68, 68, 68); font-weight: bold; --w: 119.4; transform-origin: 0px 50%; transform: scaleX(0.99);">Two Weeks Ago</div>
<div class="a" style="left:346px;top:934px;width:438px;height:53px;overflow:hidden">
<div class="t" style="left: 54.6px; top: 14px; font-size: 21.5px; color: rgb(38, 38, 38); --w: 87.4; transform-origin: 0px 50%; transform: scaleX(0.9883);">Toni Diaz</div>
<div class="t" style="left: 54.6px; top: 40px; font-size: 16px; color: rgb(38, 38, 38); --w: 51.4; transform-origin: 0px 50%; transform: scaleX(0.963);">request</div>
<div class="t" style="left: 313.3px; top: 40px; font-size: 16px; color: rgb(38, 38, 38); --w: 77; transform-origin: 0px 50%; transform: scaleX(0.9616);">25.06.2020</div>
</div>
<div class="a" style="left:1355px;top:245px;width:1px;height:742px;background:#dcdcdc;"></div>
<div class="a" style="left:835px;top:419px;width:501px;height:1px;background:#e1e1e1;"></div>
<svg width="1400" height="1000" style="left:0;top:0">
<g transform="translate(842.3 253)"><path d="M6.2 20.2H0.2V7.5L7.7 1H13.2L21.2 8V16.5" fill="#fff" stroke="#777" stroke-width="1"></path><path d="M0.2 7.5L5.7 12.5H15.2L20.7 8" fill="none" stroke="#777" stroke-width="1"></path><path d="M22.9 18.9H13.4" stroke="#8e44ad" stroke-width="2.4"></path><path d="M11.3 18.9L15.5 14.8H18.1L14.3 18.9L18.1 23H15.5Z" fill="#8e44ad"></path></g><g transform="translate(927.3 253)"><path d="M-2 16.5V6.2L5.5 -0.6H11.5" fill="none" stroke="#777" stroke-width="1"></path><path d="M6.2 20.2H0.2V7.5L7.7 1H13.2L21.2 8V16.5" fill="#fff" stroke="#777" stroke-width="1"></path><path d="M0.2 7.5L5.7 12.5H15.2L20.7 8" fill="none" stroke="#777" stroke-width="1"></path><path d="M22.9 18.9H13.4" stroke="#8e44ad" stroke-width="2.4"></path><path d="M11.3 18.9L15.5 14.8H18.1L14.3 18.9L18.1 23H15.5Z" fill="#8e44ad"></path></g><g transform="translate(1035.3 253)"><path d="M10.5 20.2H0.2V7.5L7.7 1H13.2L21.2 8V16" fill="#fff" stroke="#777" stroke-width="1"></path><path d="M0.2 7.5L5.7 12.5H15.2L20.7 8" fill="none" stroke="#777" stroke-width="1"></path><path d="M11 18.9H20.5" stroke="#3a78c0" stroke-width="2.4"></path><path d="M23.6 18.9L19.4 14.8H16.8L20.6 18.9L16.8 23H19.4Z" fill="#3a78c0"></path></g>
<rect x="835" y="285" width="72" height="72" fill="#b0b0b0"></rect>
<ellipse cx="870.3" cy="310.3" rx="14" ry="16" fill="#fff"></ellipse>
<path d="M843.4 357C844 340 847 330 858 327C862 330 866 331.5 870.5 331.5C875 331.5 879 330 883 327C894 330 898 340 899.2 357Z" fill="#fff"></path>
<path d="M1316 406L1324 398.5L1332 406" fill="none" stroke="#666" stroke-width="2.4"></path>
<!-- body scrollbar -->
<rect x="1310.5" y="439.6" width="24" height="534" fill="#f0f0f0"></rect>
<rect x="1310.5" y="440" width="24" height="23.6" fill="#fff" stroke="#c8c8c8"></rect>
<path d="M1317 454H1328L1322.5 448.5Z" fill="#606060"></path>
<rect x="1310.5" y="463.6" width="24" height="425.4" fill="#fff" stroke="#c8c8c8"></rect>
<rect x="1310.5" y="949.6" width="24" height="23.9" fill="#fff" stroke="#c8c8c8"></rect>
<path d="M1317 958.8H1328L1322.5 964.5Z" fill="#606060"></path>
</svg>
<div class="t" style="left: 869px; top: 255px; font-size: 19px; color: rgb(85, 85, 85); --w: 41.3; transform-origin: 0px 50%; transform: scaleX(0.8502);">Reply</div>
<div class="t" style="left: 952px; top: 255px; font-size: 19px; color: rgb(85, 85, 85); --w: 67.4; transform-origin: 0px 50%; transform: scaleX(0.9118);">Reply All</div>
<div class="t" style="left: 1061px; top: 255px; font-size: 19px; color: rgb(85, 85, 85); --w: 64; transform-origin: 0px 50%; transform: scaleX(0.9184);">Forward</div>
<div class="t" style="left: 939.6px; top: 288px; font-size: 15px; color: rgb(85, 85, 85); --w: 146.3; transform-origin: 0px 50%; transform: scaleX(1.04);">Mo 29.06.2020 11:35</div>
<div class="a" style="left:939px;top:310px;width:373px;height:35px;overflow:hidden">
<div class="t" style="left: 0.6px; top: 8px; font-size: 22px; color: rgb(102, 102, 102); --w: 393; transform-origin: 0px 50%; transform: scaleX(0.9731);">Toni Diaz &lt;toni.diaz.lopez@hotmail.com&gt;</div>
</div>
<div class="t" style="left: 939.6px; top: 353px; font-size: 18px; color: rgb(51, 51, 51); font-weight: bold; --w: 31.2; transform-origin: 0px 50%; transform: scaleX(0.9745);">test</div>
<div class="t" style="left: 835px; top: 388px; font-size: 17.5px; color: rgb(85, 85, 85); --w: 17.3; transform-origin: 0px 50%; transform: scaleX(0.9359);">To</div>
<div class="t" style="left: 874.9px; top: 388px; font-size: 15.5px; color: rgb(68, 68, 68); --w: 39.3; transform-origin: 0px 50%; transform: scaleX(0.9707);">vila.m</div>
<div class="t" style="left: 937px; top: 388px; font-size: 15.5px; color: rgb(68, 68, 68); --w: 157.2; transform-origin: 0px 50%; transform: scaleX(0.9848);">on@in.hotelresbot.com</div>
<div class="t" style="left: 850.4px; top: 467px; font-size: 19.5px; color: rgb(17, 17, 17); --w: 101.4; transform-origin: 0px 50%; transform: scaleX(1.0281);">Dear Hotel,</div>
<div class="t" style="left: 850.4px; top: 580px; font-size: 19.5px; color: rgb(17, 17, 17); --w: 407.1; transform-origin: 0px 50%; transform: scaleX(1.0559);">We would like to book one room for 2 people</div>
<div class="t" style="left: 850.4px; top: 608px; font-size: 19.5px; color: rgb(17, 17, 17); --w: 219.5; transform-origin: 0px 50%; transform: scaleX(1.0574);">from the 15<span style="font-size:12px;position:relative;top:-7px">th</span> to 17<span style="font-size:12px;position:relative;top:-7px">th</span> July</div>
<div class="t" style="left: 850.6px; top: 720px; font-size: 19.5px; color: rgb(17, 17, 17); --w: 211.4; transform-origin: 0px 50%; transform: scaleX(1.056);">Thank you for the offer.</div>
<div class="t" style="left: 850.6px; top: 833px; font-size: 19.5px; color: rgb(17, 17, 17); --w: 76; transform-origin: 0px 50%; transform: scaleX(0.9605);">Regards,</div>
<div class="t" style="left: 850.6px; top: 946px; font-size: 19.5px; color: rgb(17, 17, 17); --w: 38; transform-origin: 0px 50%; transform: scaleX(1.062);">Toni</div>
<div class="t" style="left: 1370.9px; top: 249px; font-size: 32px; color: rgb(92, 92, 92); --w: 488; transform-origin: 0px 50%; transform: scaleX(0.927);">Hotel Email Reservation Assistant (...</div>
<svg width="20" height="20" style="left:1893px;top:253px"><path d="M2 2L16 16M16 2L2 16" stroke="#444" stroke-width="1.6"></path></svg>
<div class="a" style="left:1391px;top:291px;width:508px;height:696px;background:#f4f4f4;"></div>
<div class="t" style="left: 1440.4px; top: 314px; font-size: 20px; color: rgb(17, 17, 17); font-weight: bold; --w: 50.1; transform-origin: 0px 50%; transform: scaleX(0.7905);">Arrival</div>
<div class="t" style="left: 1498.5px; top: 314px; font-size: 20px; color: rgb(122, 16, 16); font-weight: bold; --w: 8.5; transform-origin: 0px 50%; transform: scaleX(1.0902);">*</div>
<div class="t" style="left: 1675.5px; top: 314px; font-size: 20px; color: rgb(17, 17, 17); font-weight: bold; --w: 76.3; transform-origin: 0px 50%; transform: scaleX(0.8075);">Departure</div>
<div class="t" style="left: 1440.4px; top: 346px; font-size: 15px; color: rgb(34, 34, 34); --w: 77.8; transform-origin: 0px 50%; transform: scaleX(1.0363);">15/07/2020</div>
<div class="t" style="left: 1675.5px; top: 346px; font-size: 15px; color: rgb(34, 34, 34); --w: 77.8; transform-origin: 0px 50%; transform: scaleX(1.0363);">17/07/2020</div>
<div class="t" style="left: 1440.4px; top: 396px; font-size: 20px; color: rgb(17, 17, 17); font-weight: bold; --w: 147; transform-origin: 0px 50%; transform: scaleX(0.778);">Edit Dates Or Guest</div>
<svg width="100" height="30" style="left:1430px;top:430px">
<circle cx="20.6" cy="13.6" r="9" fill="#fff" stroke="#8a8a8a" stroke-width="1.2"></circle>
<circle cx="84" cy="13.6" r="9" fill="#fff" stroke="#8a8a8a" stroke-width="1.2"></circle>
<circle cx="84" cy="13.6" r="3.2" fill="#444"></circle>
</svg>
<div class="t" style="left: 1465.8px; top: 437px; font-size: 16px; color: rgb(34, 34, 34); --w: 22.8; transform-origin: 0px 50%; transform: scaleX(0.8732);">Yes</div>
<div class="t" style="left: 1529.3px; top: 437px; font-size: 16px; color: rgb(34, 34, 34); --w: 19; transform-origin: 0px 50%; transform: scaleX(0.929);">No</div>
<div class="t" style="left: 1440.4px; top: 509px; font-size: 20px; color: rgb(17, 17, 17); font-weight: bold; --w: 66.5; transform-origin: 0px 50%; transform: scaleX(0.7873);"># Rooms</div>
<div class="t" style="left: 1675.5px; top: 509px; font-size: 20px; color: rgb(17, 17, 17); font-weight: bold; --w: 99.9; transform-origin: 0px 50%; transform: scaleX(0.8028);">Adults/Room</div>
<div class="t" style="left: 1440.4px; top: 543px; font-size: 15px; color: rgb(34, 34, 34); --w: 7; transform-origin: 0px 50%; transform: scaleX(0.839);">1</div>
<div class="t" style="left: 1675.5px; top: 543px; font-size: 15px; color: rgb(34, 34, 34); --w: 8; transform-origin: 0px 50%; transform: scaleX(0.9588);">2</div>
<div class="t" style="left: 1440.4px; top: 602px; font-size: 17px; color: rgb(17, 17, 17); font-weight: bold; --w: 104.4; transform-origin: 0px 50%; transform: scaleX(0.8105);">Available Offers</div>
<div class="t" style="left: 1487px; top: 645px; font-size: 20px; color: rgb(17, 17, 17); font-weight: bold; --w: 62.3; transform-origin: 0px 50%; transform: scaleX(0.7573);">Selected</div>
<div class="t" style="left: 1598px; top: 645px; font-size: 20px; color: rgb(17, 17, 17); font-weight: bold; --w: 68.8; transform-origin: 0px 50%; transform: scaleX(0.777);">RateType</div>
<div class="t" style="left: 1719.6px; top: 645px; font-size: 20px; color: rgb(17, 17, 17); font-weight: bold; --w: 43.8; transform-origin: 0px 50%; transform: scaleX(0.7729);">Room</div>
<div class="t" style="left: 1821px; top: 645px; font-size: 20px; color: rgb(17, 17, 17); font-weight: bold; --w: 33.2; transform-origin: 0px 50%; transform: scaleX(0.7657);">Rate</div>
<div class="a" style="left:1482.5px;top:672.8px;width:108px;height:72.0px;background:#dcdcdc;border-radius:9px"></div>
<div class="a" style="left:1593px;top:672.8px;width:119.7px;height:72.0px;background:#eeeeee;"></div>
<div class="a" style="left:1714.8px;top:672.8px;width:73.2px;height:72.0px;background:#eeeeee;"></div>
<div class="a" style="left:1789.8px;top:672.8px;width:72.2px;height:72.0px;background:#eeeeee;"></div>
<div class="t" style="left: 1499px; top: 702px; font-size: 16px; color: rgb(34, 34, 34); --w: 19.5; transform-origin: 0px 50%; transform: scaleX(0.9534);">No</div>
<div class="t" style="left: 1605px; top: 684px; font-size: 16px; color: rgb(34, 34, 34); --w: 56; transform-origin: 0px 50%; transform: scaleX(0.8994);">Advance</div>
<div class="t" style="left: 1605px; top: 702px; font-size: 16px; color: rgb(34, 34, 34); --w: 62.5; transform-origin: 0px 50%; transform: scaleX(0.9899);">Payment</div>
<div class="t" style="left: 1605px; top: 719px; font-size: 16px; color: rgb(34, 34, 34); --w: 46; transform-origin: 0px 50%; transform: scaleX(0.9758);">Option</div>
<div class="t" style="left: 1727.4px; top: 684px; font-size: 16px; color: rgb(34, 34, 34); --w: 36.5; transform-origin: 0px 50%; transform: scaleX(0.9121);">Small</div>
<div class="t" style="left: 1727.4px; top: 702px; font-size: 16px; color: rgb(34, 34, 34); --w: 48; transform-origin: 0px 50%; transform: scaleX(0.9467);">Double</div>
<div class="t" style="left: 1727.4px; top: 719px; font-size: 16px; color: rgb(34, 34, 34); --w: 39.5; transform-origin: 0px 50%; transform: scaleX(0.9253);">Room</div>
<div class="t" style="left: 1805.2px; top: 693px; font-size: 15px; color: rgb(34, 34, 34); --w: 44.8; transform-origin: 0px 50%; transform: scaleX(0.9762);">290,70</div>
<div class="t" style="left: 1842.2px; top: 710px; font-size: 15px; color: rgb(34, 34, 34); --w: 7.8; transform-origin: 0px 50%; transform: scaleX(0.9348);">€</div>
<div class="a" style="left:1482.5px;top:747.2px;width:108px;height:71.2px;background:#dcdcdc;border-radius:9px"></div>
<div class="a" style="left:1593px;top:747.2px;width:119.7px;height:71.2px;background:#eeeeee;"></div>
<div class="a" style="left:1714.8px;top:747.2px;width:73.2px;height:71.2px;background:#eeeeee;"></div>
<div class="a" style="left:1789.8px;top:747.2px;width:72.2px;height:71.2px;background:#eeeeee;"></div>
<div class="t" style="left: 1499px; top: 776px; font-size: 16px; color: rgb(34, 34, 34); --w: 19.5; transform-origin: 0px 50%; transform: scaleX(0.9534);">No</div>
<div class="t" style="left: 1605px; top: 776px; font-size: 16px; color: rgb(34, 34, 34); --w: 52.2; transform-origin: 0px 50%; transform: scaleX(0.9467);">Flexible</div>
<div class="t" style="left: 1727.4px; top: 758px; font-size: 16px; color: rgb(34, 34, 34); --w: 36.5; transform-origin: 0px 50%; transform: scaleX(0.9121);">Small</div>
<div class="t" style="left: 1727.4px; top: 776px; font-size: 16px; color: rgb(34, 34, 34); --w: 48; transform-origin: 0px 50%; transform: scaleX(0.9467);">Double</div>
<div class="t" style="left: 1727.4px; top: 793px; font-size: 16px; color: rgb(34, 34, 34); --w: 39.5; transform-origin: 0px 50%; transform: scaleX(0.9253);">Room</div>
<div class="t" style="left: 1805.2px; top: 767px; font-size: 15px; color: rgb(34, 34, 34); --w: 44.8; transform-origin: 0px 50%; transform: scaleX(0.9762);">323,00</div>
<div class="t" style="left: 1842.2px; top: 784px; font-size: 15px; color: rgb(34, 34, 34); --w: 7.8; transform-origin: 0px 50%; transform: scaleX(0.9348);">€</div>
<div class="a" style="left:1482.5px;top:820.8px;width:108px;height:88.4px;background:#dcdcdc;border-radius:9px"></div>
<div class="a" style="left:1593px;top:820.8px;width:119.7px;height:88.4px;background:#eeeeee;"></div>
<div class="a" style="left:1714.8px;top:820.8px;width:73.2px;height:88.4px;background:#eeeeee;"></div>
<div class="a" style="left:1789.8px;top:820.8px;width:72.2px;height:88.4px;background:#eeeeee;"></div>
<div class="t" style="left: 1499px; top: 858px; font-size: 16px; color: rgb(34, 34, 34); --w: 19.5; transform-origin: 0px 50%; transform: scaleX(0.9534);">No</div>
<div class="t" style="left: 1605px; top: 832px; font-size: 16px; color: rgb(34, 34, 34); --w: 86.5; transform-origin: 0px 50%; transform: scaleX(0.9262);">Sustainable -</div>
<div class="t" style="left: 1605px; top: 849px; font-size: 16px; color: rgb(34, 34, 34); --w: 19; transform-origin: 0px 50%; transform: scaleX(0.929);">No</div>
<div class="t" style="left: 1605px; top: 866px; font-size: 16px; color: rgb(34, 34, 34); --w: 96; transform-origin: 0px 50%; transform: scaleX(0.9384);">Housekeeping</div>
<div class="t" style="left: 1605px; top: 883px; font-size: 16px; color: rgb(34, 34, 34); --w: 48; transform-origin: 0px 50%; transform: scaleX(0.8996);">Service</div>
<div class="t" style="left: 1727.4px; top: 841px; font-size: 16px; color: rgb(34, 34, 34); --w: 36.5; transform-origin: 0px 50%; transform: scaleX(0.9121);">Small</div>
<div class="t" style="left: 1727.4px; top: 858px; font-size: 16px; color: rgb(34, 34, 34); --w: 48; transform-origin: 0px 50%; transform: scaleX(0.9467);">Double</div>
<div class="t" style="left: 1727.4px; top: 875px; font-size: 16px; color: rgb(34, 34, 34); --w: 39.5; transform-origin: 0px 50%; transform: scaleX(0.9253);">Room</div>
<div class="t" style="left: 1805.2px; top: 850px; font-size: 15px; color: rgb(34, 34, 34); --w: 44.8; transform-origin: 0px 50%; transform: scaleX(0.9762);">277,40</div>
<div class="t" style="left: 1842.2px; top: 866px; font-size: 15px; color: rgb(34, 34, 34); --w: 7.8; transform-origin: 0px 50%; transform: scaleX(0.9348);">€</div>
<div class="a" style="left:1482.5px;top:911.6px;width:108px;height:71.3px;background:#dcdcdc;border-radius:9px"></div>
<div class="a" style="left:1593px;top:911.6px;width:119.7px;height:71.3px;background:#eeeeee;"></div>
<div class="a" style="left:1714.8px;top:911.6px;width:73.2px;height:71.3px;background:#eeeeee;"></div>
<div class="a" style="left:1789.8px;top:911.6px;width:72.2px;height:71.3px;background:#eeeeee;"></div>
<div class="t" style="left: 1499px; top: 940px; font-size: 16px; color: rgb(34, 34, 34); --w: 19.5; transform-origin: 0px 50%; transform: scaleX(0.9534);">No</div>
<div class="t" style="left: 1605px; top: 923px; font-size: 16px; color: rgb(34, 34, 34); --w: 56; transform-origin: 0px 50%; transform: scaleX(0.8994);">Advance</div>
<div class="t" style="left: 1605px; top: 940px; font-size: 16px; color: rgb(34, 34, 34); --w: 62.5; transform-origin: 0px 50%; transform: scaleX(0.9899);">Payment</div>
<div class="t" style="left: 1605px; top: 957px; font-size: 16px; color: rgb(34, 34, 34); --w: 46; transform-origin: 0px 50%; transform: scaleX(0.9758);">Option</div>
<div class="t" style="left: 1727.4px; top: 931px; font-size: 16px; color: rgb(34, 34, 34); --w: 48; transform-origin: 0px 50%; transform: scaleX(0.9467);">Double</div>
<div class="t" style="left: 1727.4px; top: 949px; font-size: 16px; color: rgb(34, 34, 34); --w: 39.5; transform-origin: 0px 50%; transform: scaleX(0.9253);">Room</div>
<div class="t" style="left: 1805.2px; top: 932px; font-size: 15px; color: rgb(34, 34, 34); --w: 44.8; transform-origin: 0px 50%; transform: scaleX(0.9762);">306,09</div>
<div class="t" style="left: 1842.2px; top: 948px; font-size: 15px; color: rgb(34, 34, 34); --w: 7.8; transform-origin: 0px 50%; transform: scaleX(0.9348);">€</div>
<div class="a" style="left:1482.5px;top:985.6px;width:108px;height:2px;background:#dcdcdc;border-radius:9px 9px 0 0"></div>
<div class="a" style="left:1593px;top:985.6px;width:269px;height:2px;background:#eeeeee;"></div>
<svg width="1920" height="1000" style="left:0;top:0"><circle cx="1460.2" cy="708.8" r="13.7" fill="#2f6fe6"></circle><path d="M1455.2 703.8L1465.2 713.8M1465.2 703.8L1455.2 713.8" stroke="#fff" stroke-width="3.2" stroke-linecap="round"></path><circle cx="1460.2" cy="782.8" r="13.7" fill="#2f6fe6"></circle><path d="M1455.2 777.8L1465.2 787.8M1465.2 777.8L1455.2 787.8" stroke="#fff" stroke-width="3.2" stroke-linecap="round"></path><circle cx="1460.2" cy="865.0" r="13.7" fill="#2f6fe6"></circle><path d="M1455.2 860.0L1465.2 870.0M1465.2 860.0L1455.2 870.0" stroke="#fff" stroke-width="3.2" stroke-linecap="round"></path><circle cx="1460.2" cy="947.2" r="13.7" fill="#2f6fe6"></circle><path d="M1455.2 942.2L1465.2 952.2M1465.2 942.2L1455.2 952.2" stroke="#fff" stroke-width="3.2" stroke-linecap="round"></path></svg>
<div class="a" style="left:0px;top:987px;width:1920px;height:33px;background:#f1f1f1;border-top:1px solid #d4d4d4"></div>
<div class="a" style="left:1531.4px;top:988px;width:59.5px;height:32px;background:#c9c9c9;"></div>
<div class="t" style="left: 11px; top: 996px; font-size: 16px; color: rgb(68, 68, 68); --w: 71.5; transform-origin: 0px 50%; transform: scaleX(0.9571);">Items: 251</div>
<div class="t" style="left: 105px; top: 996px; font-size: 16px; color: rgb(68, 68, 68); --w: 75; transform-origin: 0px 50%; transform: scaleX(0.9473);">Unread: 31</div>
<div class="t" style="left: 1044px; top: 996px; font-size: 16px; color: rgb(68, 68, 68); --w: 300; transform-origin: 0px 50%; transform: scaleX(0.9664);">This folder was last updated on 09.07.2020.</div>
<div class="t" style="left: 1398.8px; top: 996px; font-size: 16px; color: rgb(68, 68, 68); --w: 106.4; transform-origin: 0px 50%; transform: scaleX(0.942);">Need Password</div>
<div class="t" style="left: 1865.8px; top: 996px; font-size: 16px; color: rgb(68, 68, 68); --w: 42.3; transform-origin: 0px 50%; transform: scaleX(0.9322);">100 %</div>
<svg width="1920" height="1080" style="left:0;top:0">
<path d="M1378 993.5H1386V1000.5H1383.5V1011H1381V1009H1379.5V1006.5H1381V1000.5H1378Z" fill="#666"></path>
<circle cx="1382" cy="996" r="1.2" fill="#f1f1f1"></circle>
<rect x="1551.5" y="993.5" width="18.2" height="17" fill="none" stroke="#6a6a6a" stroke-width="1"></rect>
<path d="M1556.5 993.5V1010.5" stroke="#6a6a6a" stroke-width="1"></path>
<rect x="1611.2" y="993.3" width="18.4" height="15.4" fill="none" stroke="#6a6a6a" stroke-width="1"></rect>
<path d="M1620.4 993.3V1010.5M1613.5 996.5H1618M1613.5 999.5H1618M1613.5 1002.5H1618M1613.5 1005.5H1618M1622.8 996.5H1627.3M1622.8 999.5H1627.3M1622.8 1002.5H1627.3M1622.8 1005.5H1627.3" stroke="#6a6a6a" stroke-width="1"></path>
<path d="M1659 1002.5H1669.6M1835 1002.5H1846.3M1840.6 996.5V1008.5" stroke="#555" stroke-width="1.2"></path>
<path d="M1679.2 1003H1826.5" stroke="#a8a8a8" stroke-width="1.2"></path>
<rect x="1749.2" y="995.2" width="7.3" height="16.6" fill="#666"></rect>
</svg>
<div class="a" style="left:0px;top:1020px;width:1920px;height:60px;background:linear-gradient(90deg,#341936 0%,#381a36 30%,#3a1b2c 55%,#3b1b21 75%,#3c1b1c 100%);"></div>
<div class="a" style="left:72px;top:1020px;width:516px;height:60px;background:#f2f2f2;border:2px solid #bdbdbd;border-bottom:none"></div>
<div class="a" style="left:1187.5px;top:1020px;width:72.5px;height:60px;background:#574247;"></div>
<div class="a" style="left:817.5px;top:1077px;width:61.0px;height:3px;background:#76b9ed;"></div>
<div class="a" style="left:893.5px;top:1077px;width:60.0px;height:3px;background:#76b9ed;"></div>
<div class="a" style="left:967.5px;top:1077px;width:61.0px;height:3px;background:#76b9ed;"></div>
<div class="a" style="left:1042.5px;top:1077px;width:61.5px;height:3px;background:#76b9ed;"></div>
<div class="a" style="left:1117.5px;top:1077px;width:61.0px;height:3px;background:#76b9ed;"></div>
<div class="a" style="left:1187.5px;top:1077px;width:72.5px;height:3px;background:#76b9ed;"></div>
<div class="t" style="left: 132.3px; top: 1042px; font-size: 21px; color: rgb(26, 26, 26); --w: 294.2; transform-origin: 0px 50%; transform: scaleX(1.0738);">Zur Suche Text hier eingeben</div>
<div class="t" style="left: 1688.8px; top: 1043px; font-size: 17.5px; color: rgb(255, 255, 255); --w: 32.5; transform-origin: 0px 50%; transform: scaleX(0.8795);">DEU</div>
<div class="t" style="left: 1765.3px; top: 1029px; font-size: 17.5px; color: rgb(255, 255, 255); --w: 42.2; transform-origin: 0px 50%; transform: scaleX(0.9635);">15:00</div>
<div class="t" style="left: 1743.4px; top: 1056px; font-size: 17.5px; color: rgb(255, 255, 255); --w: 86; transform-origin: 0px 50%; transform: scaleX(0.9966);">11.07.2020</div>
<svg width="1920" height="1080" style="left:0;top:0">
<path d="M23.8 1040.5L34 1039V1049.3H23.8Z M35.2 1038.8L48.1 1037.7V1049.3H35.2Z M23.8 1050.5H34V1060.8L23.8 1059.4Z M35.2 1050.5H48.1V1062.1L35.2 1060.9Z" fill="#fff"></path>
<circle cx="105.7" cy="1046" r="7.3" fill="none" stroke="#1a1a1a" stroke-width="1.6"></circle>
<path d="M100.5 1051.3L90.2 1061.8" stroke="#1a1a1a" stroke-width="1.8"></path>
<circle cx="623.8" cy="1049.8" r="10.6" fill="none" stroke="#fff" stroke-width="2.6"></circle>
<g fill="none" stroke="#fff" stroke-width="1.3">
<rect x="684.5" y="1044.5" width="15.5" height="12"></rect>
<path d="M684.5 1038V1040.8H700V1038M684.5 1061V1058.7H700V1061M707.5 1038V1061"></path>
</g>
<rect x="705.5" y="1045" width="4" height="3.5" fill="#fff"></rect>
<path d="M757.5 1037.5H765L767 1039.5H789V1062.5H757.5Z" fill="#f4bd50"></path>
<path d="M757.5 1041H789V1062.5H757.5Z" fill="#ffd566"></path>
<path d="M764 1064V1053.5Q764 1050.5 767 1050.5H780Q783 1050.5 783 1053.5V1064H779.5V1056H767.5V1064Z" fill="#3a8ee0"></path>
<!-- chrome 1 -->
<circle cx="846" cy="1049" r="16" fill="#2aa24a"></circle>
<path d="M846 1033A16 16 0 0 1 859.9 1041H846A8 8 0 0 0 839 1045L832.1 1041A16 16 0 0 1 846 1033Z" fill="#db4437"></path>
<path d="M859.9 1041A16 16 0 0 1 849 1064.7L853 1053A8 8 0 0 0 854 1041Z" fill="#fcc934"></path>
<circle cx="846" cy="1049" r="7.5" fill="#fff"></circle><circle cx="846" cy="1049" r="6" fill="#4285f4"></circle>
<circle cx="856.5" cy="1057" r="11.5" fill="#3a3a3a"></circle><ellipse cx="856" cy="1055" rx="5" ry="7" fill="#9a9a9a"></ellipse>
<!-- chrome 2 -->
<circle cx="921" cy="1049" r="16" fill="#2aa24a"></circle>
<path d="M921 1033A16 16 0 0 1 934.9 1041H921A8 8 0 0 0 914 1045L907.1 1041A16 16 0 0 1 921 1033Z" fill="#db4437"></path>
<path d="M934.9 1041A16 16 0 0 1 924 1064.7L928 1053A8 8 0 0 0 929 1041Z" fill="#fcc934"></path>
<circle cx="921" cy="1049" r="7.5" fill="#fff"></circle><circle cx="921" cy="1049" r="6" fill="#4285f4"></circle>
<circle cx="933" cy="1057" r="11.5" fill="#777"></circle><ellipse cx="933" cy="1055" rx="5.5" ry="7.5" fill="#c9b8a8"></ellipse>
<!-- word -->
<rect x="988.5" y="1034" width="27" height="31.5" rx="1.5" fill="#2b7cd3"></rect>
<rect x="988.5" y="1044.5" width="27" height="10.5" fill="#185abd"></rect>
<rect x="988.5" y="1055" width="27" height="10.5" rx="1" fill="#103f91"></rect>
<rect x="980" y="1041" width="19" height="19" rx="1.5" fill="#185abd"></rect>
<text x="982.3" y="1056" font-family="Liberation Sans" font-weight="bold" font-size="13" fill="#fff">W</text>
<!-- ppt -->
<circle cx="1077" cy="1049" r="17.5" fill="#ed6c47"></circle>
<path d="M1077 1031.5A17.5 17.5 0 0 1 1094.5 1049H1077Z" fill="#ff8f6b"></path>
<path d="M1059.5 1049A17.5 17.5 0 0 0 1094.5 1049Z" fill="#d35230"></path>
<rect x="1055" y="1041" width="19" height="19" rx="1.5" fill="#c43e1c"></rect>
<text x="1059.5" y="1056" font-family="Liberation Sans" font-weight="bold" font-size="13" fill="#fff">P</text>
<!-- slack -->
<circle cx="1147.5" cy="1049.5" r="17.5" fill="#fff"></circle>
<g stroke-linecap="round" stroke-width="4.2">
<path d="M1143 1044H1137" stroke="#36c5f0"></path><path d="M1151.5 1041V1048" stroke="#2eb67d"></path>
<path d="M1152 1054H1158" stroke="#ecb22e"></path><path d="M1143.5 1051V1058" stroke="#e01e5a"></path>
</g>
<circle cx="1143.5" cy="1039" r="2.1" fill="#36c5f0"></circle><circle cx="1156.5" cy="1045" r="2.1" fill="#2eb67d"></circle>
<circle cx="1151.5" cy="1060" r="2.1" fill="#ecb22e"></circle><circle cx="1138.5" cy="1054" r="2.1" fill="#e01e5a"></circle>
<!-- outlook -->
<rect x="1214.5" y="1034" width="24" height="30" rx="1.5" fill="#1490df"></rect>
<rect x="1214.5" y="1034" width="24" height="9" fill="#0f6cbd"></rect>
<rect x="1205" y="1041" width="17" height="17" rx="1.5" fill="#0f6cbd"></rect>
<text x="1208" y="1055" font-family="Liberation Sans" font-weight="bold" font-size="13" fill="#fff">O</text>
<path d="M1232.5 1051L1244.5 1071H1220.5Z" fill="#f5b26b" stroke="#f5b26b" stroke-width="2" stroke-linejoin="round"></path>
<path d="M1232.5 1057V1064" stroke="#6b4a2a" stroke-width="1.8"></path><circle cx="1232.5" cy="1067" r="1" fill="#6b4a2a"></circle>
<path d="M1651 1053.6L1660 1044.2L1669 1053.6" fill="none" stroke="#fff" stroke-width="1.2"></path>
<path d="M1857.8 1037.7H1882.2V1057.5H1873.5L1870 1061.9L1866.5 1057.5H1857.8Z" fill="#fff"></path>
<path d="M1863 1043.5H1877M1863 1047.5H1877M1863 1051.5H1872" stroke="#3c1b1c" stroke-width="1.1"></path>
<path d="M1913.5 1020V1080" stroke="#8a7a7a" stroke-width="1"></path>
</svg>
</body></html>
